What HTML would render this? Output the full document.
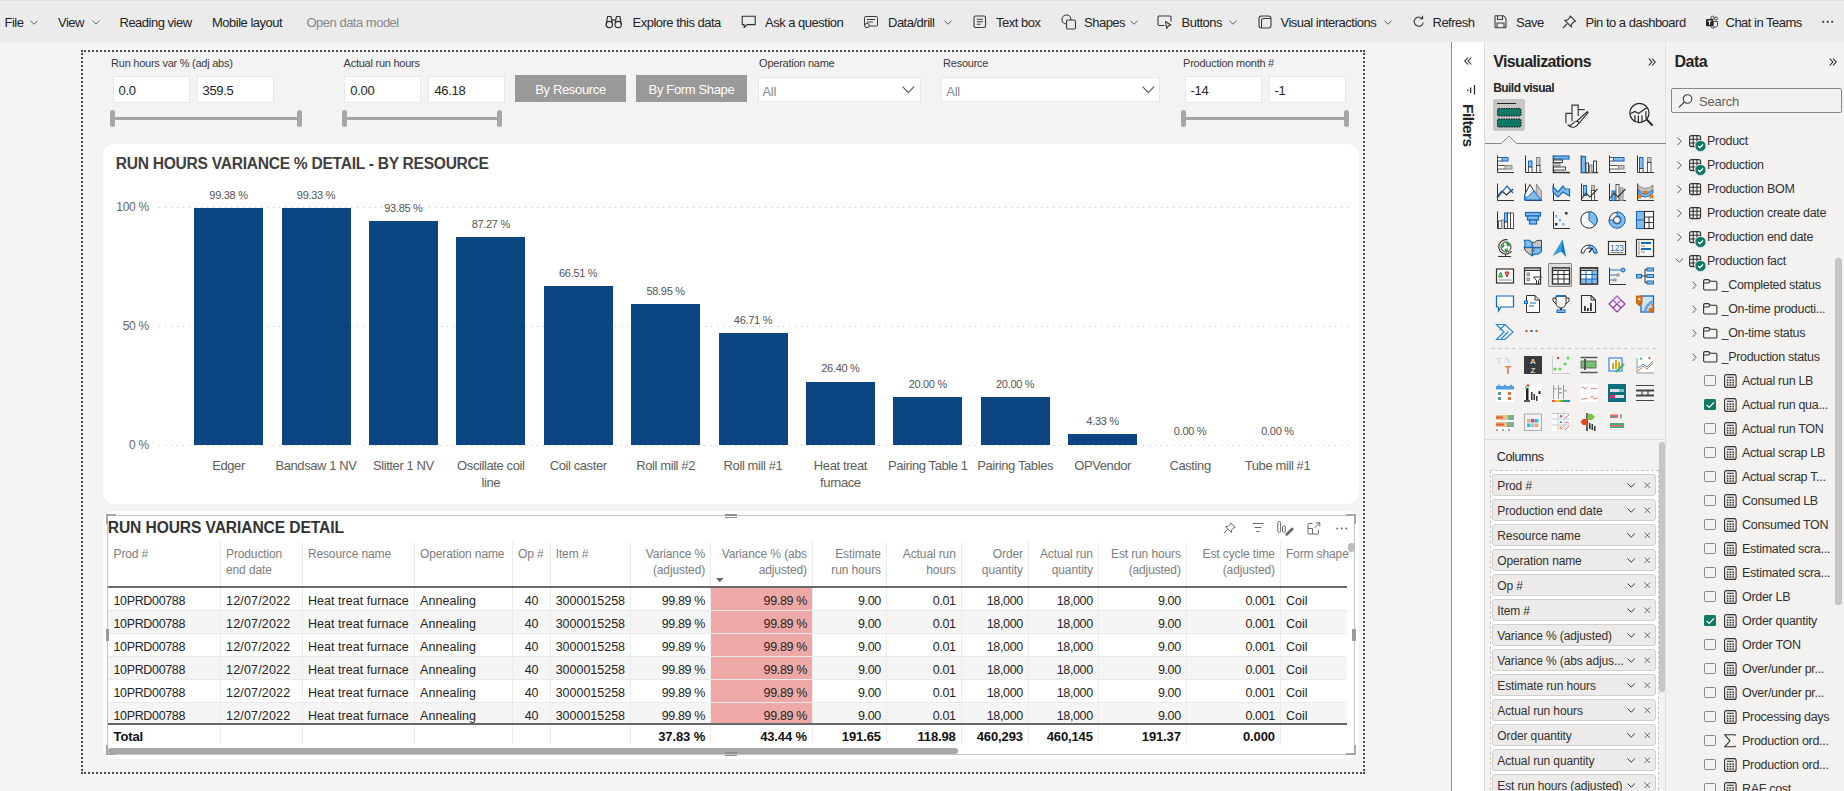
<!DOCTYPE html>
<html><head><meta charset="utf-8"><title>Power BI</title>
<style>
html,body{margin:0;padding:0;}
body{width:1844px;height:791px;overflow:hidden;position:relative;background:#f3f3f3;font-family:"Liberation Sans",sans-serif;}
.t{position:absolute;line-height:1;white-space:nowrap;}
.b{position:absolute;box-sizing:border-box;}
svg.b{overflow:visible;}
</style></head><body>

<div class="b" style="left:0px;top:0px;width:1844px;height:42px;background:#ebebeb;border-top:1px solid #dedede;"></div>
<div class="t" style="left:4.5px;top:16.3px;font-size:13px;color:#252423;font-weight:400;letter-spacing:-0.5px;">File</div>
<svg class="b" style="left:30px;top:20.0px;" width="8" height="5" viewBox="0 0 8 5"><path d="M0.5 0.8 L4 4.2 L7.5 0.8" fill="none" stroke="#605e5c" stroke-width="1"/></svg>
<div class="t" style="left:58.0px;top:16.3px;font-size:13px;color:#252423;font-weight:400;letter-spacing:-0.5px;">View</div>
<svg class="b" style="left:91.5px;top:20.0px;" width="8" height="5" viewBox="0 0 8 5"><path d="M0.5 0.8 L4 4.2 L7.5 0.8" fill="none" stroke="#605e5c" stroke-width="1"/></svg>
<div class="t" style="left:119.5px;top:16.3px;font-size:13px;color:#252423;font-weight:400;letter-spacing:-0.5px;">Reading view</div>
<div class="t" style="left:212.0px;top:16.3px;font-size:13px;color:#252423;font-weight:400;letter-spacing:-0.5px;">Mobile layout</div>
<div class="t" style="left:306.5px;top:16.3px;font-size:13px;color:#8a8886;font-weight:400;letter-spacing:-0.5px;">Open data model</div>
<svg class="b" style="left:605px;top:15px;" width="18" height="14" viewBox="0 0 18 14"><g fill="none" stroke="#323130" stroke-width="1.2"><circle cx="4.3" cy="9.5" r="3.2"/><circle cx="13.2" cy="9.5" r="3.2"/><path d="M1.2 9.3 L2.6 1.5 H6 L7.3 8"/><path d="M16.3 9.3 L14.9 1.5 H11.5 L10.2 8"/><path d="M6.5 5 H11"/></g></svg>
<div class="t" style="left:632.5px;top:16.3px;font-size:13px;color:#252423;font-weight:400;letter-spacing:-0.5px;">Explore this data</div>
<svg class="b" style="left:741px;top:15px;" width="16" height="14" viewBox="0 0 16 14"><path d="M1.2 1.2 H14.2 V9.6 H6 L3.2 12.5 V9.6 H1.2 Z" fill="none" stroke="#323130" stroke-width="1.1" stroke-linejoin="round"/></svg>
<div class="t" style="left:765.0px;top:16.3px;font-size:13px;color:#252423;font-weight:400;letter-spacing:-0.5px;">Ask a question</div>
<svg class="b" style="left:863px;top:15px;" width="16" height="14" viewBox="0 0 16 14"><g fill="none" stroke="#3b3a39" stroke-width="1"><rect x="1.5" y="1.5" width="13" height="9.5" rx="1"/><path d="M4 4.5 H12 M4 7 H10"/><circle cx="4" cy="10.5" r="2.2" fill="#ebebeb"/></g></svg>
<div class="t" style="left:888.0px;top:16.3px;font-size:13px;color:#252423;font-weight:400;letter-spacing:-0.5px;">Data/drill</div>
<svg class="b" style="left:943.5px;top:20.0px;" width="8" height="5" viewBox="0 0 8 5"><path d="M0.5 0.8 L4 4.2 L7.5 0.8" fill="none" stroke="#605e5c" stroke-width="1"/></svg>
<svg class="b" style="left:973px;top:15px;" width="14" height="14" viewBox="0 0 14 14"><g fill="none" stroke="#3b3a39" stroke-width="1.1"><rect x="1" y="1" width="11.5" height="11.5" rx="1.5"/><path d="M3.8 4.3 H9.7 M3.8 6.8 H9.7 M3.8 9.3 H7.5"/></g></svg>
<div class="t" style="left:996.0px;top:16.3px;font-size:13px;color:#252423;font-weight:400;letter-spacing:-0.5px;">Text box</div>
<svg class="b" style="left:1061px;top:14px;" width="16" height="16" viewBox="0 0 16 16"><g fill="none" stroke="#3b3a39" stroke-width="1.1"><circle cx="5.5" cy="5.5" r="4.5"/><rect x="5.5" y="6" width="9" height="9" rx="1.5" fill="#ebebeb"/></g></svg>
<div class="t" style="left:1084.0px;top:16.3px;font-size:13px;color:#252423;font-weight:400;letter-spacing:-0.5px;">Shapes</div>
<svg class="b" style="left:1129.5px;top:20.0px;" width="8" height="5" viewBox="0 0 8 5"><path d="M0.5 0.8 L4 4.2 L7.5 0.8" fill="none" stroke="#605e5c" stroke-width="1"/></svg>
<svg class="b" style="left:1157px;top:15px;" width="16" height="14" viewBox="0 0 16 14"><g fill="none" stroke="#3b3a39" stroke-width="1.1"><path d="M7.5 10.5 H2 a1 1 0 0 1 -1 -1 V2 a1 1 0 0 1 1 -1 H13 a1 1 0 0 1 1 1 V6.5"/><path d="M8.5 6.5 L9.7 13.5 L11.2 11 L13.8 10 Z" stroke-linejoin="round"/></g></svg>
<div class="t" style="left:1181.5px;top:16.3px;font-size:13px;color:#252423;font-weight:400;letter-spacing:-0.5px;">Buttons</div>
<svg class="b" style="left:1229px;top:20.0px;" width="8" height="5" viewBox="0 0 8 5"><path d="M0.5 0.8 L4 4.2 L7.5 0.8" fill="none" stroke="#605e5c" stroke-width="1"/></svg>
<svg class="b" style="left:1258px;top:15px;" width="14" height="14" viewBox="0 0 14 14"><g fill="none" stroke="#3b3a39" stroke-width="1.1"><rect x="1" y="1" width="12" height="12" rx="2.5"/><path d="M3.5 12.5 V5.5 a2 2 0 0 1 2 -2 H12.5"/></g></svg>
<div class="t" style="left:1280.5px;top:16.3px;font-size:13px;color:#252423;font-weight:400;letter-spacing:-0.5px;">Visual interactions</div>
<svg class="b" style="left:1384px;top:20.0px;" width="8" height="5" viewBox="0 0 8 5"><path d="M0.5 0.8 L4 4.2 L7.5 0.8" fill="none" stroke="#605e5c" stroke-width="1"/></svg>
<svg class="b" style="left:1413px;top:15px;" width="12" height="14" viewBox="0 0 12 14"><g fill="none" stroke="#3b3a39" stroke-width="1.1"><path d="M9.3 3.6 A4.6 4.6 0 1 0 10.3 7.5"/><path d="M9.6 0.8 V3.8 H6.6"/></g></svg>
<div class="t" style="left:1432.5px;top:16.3px;font-size:13px;color:#252423;font-weight:400;letter-spacing:-0.5px;">Refresh</div>
<svg class="b" style="left:1494px;top:15px;" width="13" height="14" viewBox="0 0 13 14"><g fill="none" stroke="#3b3a39" stroke-width="1.1"><path d="M1 1.5 a0.8 0.8 0 0 1 0.8 -0.8 H9.5 L12 3.2 V12 a0.8 0.8 0 0 1 -0.8 0.8 H1.8 a0.8 0.8 0 0 1 -0.8 -0.8 Z"/><path d="M3.5 1 V4.5 H8.5 V1"/><path d="M3 12.5 V8 H10 V12.5"/></g></svg>
<div class="t" style="left:1516.0px;top:16.3px;font-size:13px;color:#252423;font-weight:400;letter-spacing:-0.5px;">Save</div>
<svg class="b" style="left:1562px;top:15px;" width="15" height="14" viewBox="0 0 15 14"><g fill="none" stroke="#3b3a39" stroke-width="1.1" stroke-linejoin="round"><path d="M8.3 1 L13.6 6.3 L11.8 7 L9.4 9.4 L9.4 12 L2.6 5.2 L5.2 5.2 L7.6 2.8 Z"/><path d="M5 9 L1 13"/></g></svg>
<div class="t" style="left:1585.5px;top:16.3px;font-size:13px;color:#252423;font-weight:400;letter-spacing:-0.5px;">Pin to a dashboard</div>
<svg class="b" style="left:1705px;top:15px;" width="14" height="14" viewBox="0 0 14 14"><g><circle cx="11" cy="3.5" r="1.5" fill="none" stroke="#3b3a39" stroke-width="0.9"/><path d="M8.2 6.5 H12.5 V10.5 a2.2 2.2 0 0 1 -4.3 0 Z" fill="none" stroke="#3b3a39" stroke-width="0.9"/><circle cx="7.5" cy="2.8" r="1.6" fill="none" stroke="#3b3a39" stroke-width="0.9"/><path d="M5.5 11.2 a2.8 2.8 0 0 0 3.8 1.5" fill="none" stroke="#3b3a39" stroke-width="0.9"/><rect x="1" y="4" width="7.2" height="7.2" rx="1" fill="#252423"/><path d="M2.8 6 H6.4 M4.6 6 V9.8" stroke="#fff" stroke-width="1.2"/></g></svg>
<div class="t" style="left:1725.5px;top:16.3px;font-size:13px;color:#252423;font-weight:400;letter-spacing:-0.5px;">Chat in Teams</div>
<svg class="b" style="left:1822px;top:20px;" width="12" height="4" viewBox="0 0 12 4"><g fill="#3b3a39"><circle cx="1.2" cy="1.8" r="1.1"/><circle cx="5.7" cy="1.8" r="1.1"/><circle cx="10.2" cy="1.8" r="1.1"/></g></svg>
<div class="b" style="left:81px;top:50px;width:1284px;height:724px;border:2px dotted #4a4a4a;"></div>
<div class="t" style="left:111.1px;top:58.0px;font-size:11px;color:#3b3a39;font-weight:400;letter-spacing:-0.25px;">Run hours var % (adj abs)</div>
<div class="b" style="left:112.5px;top:76px;width:77px;height:26.5px;background:#fff;border:1px solid #e8e8e8;"></div>
<div class="b" style="left:196.5px;top:76px;width:77px;height:26.5px;background:#fff;border:1px solid #e8e8e8;"></div>
<div class="t" style="left:118.5px;top:84.1px;font-size:13px;color:#252423;font-weight:400;letter-spacing:-0.3px;">0.0</div>
<div class="t" style="left:202.5px;top:84.1px;font-size:13px;color:#252423;font-weight:400;letter-spacing:-0.3px;">359.5</div>
<div class="b" style="left:111.5px;top:116.8px;width:187.5px;height:3px;background:#a6a6a6;"></div>
<div class="b" style="left:109.5px;top:110px;width:5px;height:16.5px;background:#a6a6a6;border-radius:2.5px;"></div>
<div class="b" style="left:297px;top:110px;width:5px;height:16.5px;background:#a6a6a6;border-radius:2.5px;"></div>
<div class="t" style="left:343.6px;top:58.0px;font-size:11px;color:#3b3a39;font-weight:400;letter-spacing:-0.25px;">Actual run hours</div>
<div class="b" style="left:344.3px;top:76px;width:77px;height:26.5px;background:#fff;border:1px solid #e8e8e8;"></div>
<div class="b" style="left:428.4px;top:76px;width:77px;height:26.5px;background:#fff;border:1px solid #e8e8e8;"></div>
<div class="t" style="left:350.3px;top:84.1px;font-size:13px;color:#252423;font-weight:400;letter-spacing:-0.3px;">0.00</div>
<div class="t" style="left:434.4px;top:84.1px;font-size:13px;color:#252423;font-weight:400;letter-spacing:-0.3px;">46.18</div>
<div class="b" style="left:344px;top:116.8px;width:155px;height:3px;background:#a6a6a6;"></div>
<div class="b" style="left:342px;top:110px;width:5px;height:16.5px;background:#a6a6a6;border-radius:2.5px;"></div>
<div class="b" style="left:497px;top:110px;width:5px;height:16.5px;background:#a6a6a6;border-radius:2.5px;"></div>
<div class="t" style="left:1183.1px;top:58.0px;font-size:11px;color:#3b3a39;font-weight:400;letter-spacing:-0.25px;">Production month #</div>
<div class="b" style="left:1184.5px;top:76px;width:77px;height:26.5px;background:#fff;border:1px solid #e8e8e8;"></div>
<div class="b" style="left:1268.6px;top:76px;width:77px;height:26.5px;background:#fff;border:1px solid #e8e8e8;"></div>
<div class="t" style="left:1190.5px;top:84.1px;font-size:13px;color:#252423;font-weight:400;letter-spacing:-0.3px;">-14</div>
<div class="t" style="left:1274.6px;top:84.1px;font-size:13px;color:#252423;font-weight:400;letter-spacing:-0.3px;">-1</div>
<div class="b" style="left:1183px;top:116.8px;width:163.4000000000001px;height:3px;background:#a6a6a6;"></div>
<div class="b" style="left:1181px;top:110px;width:5px;height:16.5px;background:#a6a6a6;border-radius:2.5px;"></div>
<div class="b" style="left:1344.4px;top:110px;width:5px;height:16.5px;background:#a6a6a6;border-radius:2.5px;"></div>
<div class="b" style="left:515px;top:75px;width:111px;height:27px;background:#999999;"></div>
<div class="t" style="left:515.0px;width:111px;text-align:center;top:83.1px;font-size:13px;color:#ffffff;font-weight:400;letter-spacing:-0.35px;">By Resource</div>
<div class="b" style="left:636px;top:75px;width:111px;height:27px;background:#999999;"></div>
<div class="t" style="left:636.0px;width:111px;text-align:center;top:83.1px;font-size:13px;color:#ffffff;font-weight:400;letter-spacing:-0.35px;">By Form Shape</div>
<div class="t" style="left:759.1px;top:58.0px;font-size:11px;color:#3b3a39;font-weight:400;letter-spacing:-0.25px;">Operation name</div>
<div class="b" style="left:757.5px;top:76.7px;width:163px;height:25px;background:#fff;border:1px solid #e8e8e8;"></div>
<div class="t" style="left:762.5px;top:84.5px;font-size:13px;color:#8a8a8a;font-weight:400;letter-spacing:-0.3px;">All</div>
<svg class="b" style="left:902.3px;top:86px;" width="13" height="8" viewBox="0 0 13 8"><path d="M0.6 0.6 L6.3 6.6 L12 0.6" fill="none" stroke="#555" stroke-width="1.1"/></svg>
<div class="t" style="left:943.1px;top:58.0px;font-size:11px;color:#3b3a39;font-weight:400;letter-spacing:-0.25px;">Resource</div>
<div class="b" style="left:941.3px;top:76.7px;width:219px;height:25px;background:#fff;border:1px solid #e8e8e8;"></div>
<div class="t" style="left:946.3px;top:84.5px;font-size:13px;color:#8a8a8a;font-weight:400;letter-spacing:-0.3px;">All</div>
<svg class="b" style="left:1141.7px;top:86px;" width="13" height="8" viewBox="0 0 13 8"><path d="M0.6 0.6 L6.3 6.6 L12 0.6" fill="none" stroke="#555" stroke-width="1.1"/></svg>
<div class="b" style="left:103px;top:143.6px;width:1256px;height:360.5px;background:#fff;border-radius:12px;"></div>
<div class="t" style="left:115.8px;top:156.2px;font-size:15.6px;color:#404040;font-weight:700;letter-spacing:-0.28px;">RUN HOURS VARIANCE % DETAIL - BY RESOURCE</div>
<div class="t" style="right:1695.2px;top:200.8px;font-size:12px;color:#666666;font-weight:400;letter-spacing:-0.3px;">100 %</div>
<div class="b" style="left:159px;top:207px;width:1191px;height:1px;background-image:linear-gradient(to right,#c8c8c8 0,#c8c8c8 1px,transparent 1px);background-size:6px 1px;"></div>
<div class="t" style="right:1695.2px;top:319.8px;font-size:12px;color:#666666;font-weight:400;letter-spacing:-0.3px;">50 %</div>
<div class="b" style="left:159px;top:326px;width:1191px;height:1px;background-image:linear-gradient(to right,#c8c8c8 0,#c8c8c8 1px,transparent 1px);background-size:6px 1px;"></div>
<div class="t" style="right:1695.2px;top:438.8px;font-size:12px;color:#666666;font-weight:400;letter-spacing:-0.3px;">0 %</div>
<div class="b" style="left:159px;top:445px;width:1191px;height:1px;background-image:linear-gradient(to right,#c8c8c8 0,#c8c8c8 1px,transparent 1px);background-size:6px 1px;"></div>
<div class="b" style="left:194px;top:208px;width:69px;height:237.0px;background:#0b4582;"></div>
<div class="t" style="left:183.5px;width:90px;text-align:center;top:189.7px;font-size:11px;color:#555555;font-weight:400;letter-spacing:-0.3px;">99.38 %</div>
<div class="t" style="left:183.5px;top:457.2px;width:90px;text-align:center;font-size:13px;line-height:17px;color:#605e5c;letter-spacing:-0.4px;white-space:normal;">Edger</div>
<div class="b" style="left:282px;top:208px;width:69px;height:237.0px;background:#0b4582;"></div>
<div class="t" style="left:271.0px;width:90px;text-align:center;top:189.8px;font-size:11px;color:#555555;font-weight:400;letter-spacing:-0.3px;">99.33 %</div>
<div class="t" style="left:271.0px;top:457.2px;width:90px;text-align:center;font-size:13px;line-height:17px;color:#605e5c;letter-spacing:-0.4px;white-space:normal;">Bandsaw 1 NV</div>
<div class="b" style="left:369px;top:221px;width:69px;height:224.0px;background:#0b4582;"></div>
<div class="t" style="left:358.4px;width:90px;text-align:center;top:202.8px;font-size:11px;color:#555555;font-weight:400;letter-spacing:-0.3px;">93.85 %</div>
<div class="t" style="left:358.4px;top:457.2px;width:90px;text-align:center;font-size:13px;line-height:17px;color:#605e5c;letter-spacing:-0.4px;white-space:normal;">Slitter 1 NV</div>
<div class="b" style="left:456px;top:237px;width:69px;height:208.0px;background:#0b4582;"></div>
<div class="t" style="left:445.8px;width:90px;text-align:center;top:218.5px;font-size:11px;color:#555555;font-weight:400;letter-spacing:-0.3px;">87.27 %</div>
<div class="t" style="left:445.8px;top:457.2px;width:90px;text-align:center;font-size:13px;line-height:17px;color:#605e5c;letter-spacing:-0.4px;white-space:normal;">Oscillate coil<br>line</div>
<div class="b" style="left:544px;top:286px;width:69px;height:159.0px;background:#0b4582;"></div>
<div class="t" style="left:533.2px;width:90px;text-align:center;top:267.9px;font-size:11px;color:#555555;font-weight:400;letter-spacing:-0.3px;">66.51 %</div>
<div class="t" style="left:533.2px;top:457.2px;width:90px;text-align:center;font-size:13px;line-height:17px;color:#605e5c;letter-spacing:-0.4px;white-space:normal;">Coil caster</div>
<div class="b" style="left:631px;top:304px;width:69px;height:141.0px;background:#0b4582;"></div>
<div class="t" style="left:620.6px;width:90px;text-align:center;top:285.9px;font-size:11px;color:#555555;font-weight:400;letter-spacing:-0.3px;">58.95 %</div>
<div class="t" style="left:620.6px;top:457.2px;width:90px;text-align:center;font-size:13px;line-height:17px;color:#605e5c;letter-spacing:-0.4px;white-space:normal;">Roll mill #2</div>
<div class="b" style="left:719px;top:333px;width:69px;height:112.0px;background:#0b4582;"></div>
<div class="t" style="left:708.0px;width:90px;text-align:center;top:315.0px;font-size:11px;color:#555555;font-weight:400;letter-spacing:-0.3px;">46.71 %</div>
<div class="t" style="left:708.0px;top:457.2px;width:90px;text-align:center;font-size:13px;line-height:17px;color:#605e5c;letter-spacing:-0.4px;white-space:normal;">Roll mill #1</div>
<div class="b" style="left:806px;top:382px;width:69px;height:63.0px;background:#0b4582;"></div>
<div class="t" style="left:795.4px;width:90px;text-align:center;top:363.4px;font-size:11px;color:#555555;font-weight:400;letter-spacing:-0.3px;">26.40 %</div>
<div class="t" style="left:795.4px;top:457.2px;width:90px;text-align:center;font-size:13px;line-height:17px;color:#605e5c;letter-spacing:-0.4px;white-space:normal;">Heat treat<br>furnace</div>
<div class="b" style="left:893px;top:397px;width:69px;height:48.0px;background:#0b4582;"></div>
<div class="t" style="left:882.8px;width:90px;text-align:center;top:378.6px;font-size:11px;color:#555555;font-weight:400;letter-spacing:-0.3px;">20.00 %</div>
<div class="t" style="left:882.8px;top:457.2px;width:90px;text-align:center;font-size:13px;line-height:17px;color:#605e5c;letter-spacing:-0.4px;white-space:normal;">Pairing Table 1</div>
<div class="b" style="left:981px;top:397px;width:69px;height:48.0px;background:#0b4582;"></div>
<div class="t" style="left:970.2px;width:90px;text-align:center;top:378.6px;font-size:11px;color:#555555;font-weight:400;letter-spacing:-0.3px;">20.00 %</div>
<div class="t" style="left:970.2px;top:457.2px;width:90px;text-align:center;font-size:13px;line-height:17px;color:#605e5c;letter-spacing:-0.4px;white-space:normal;">Pairing Tables</div>
<div class="b" style="left:1068px;top:434px;width:69px;height:11.0px;background:#0b4582;"></div>
<div class="t" style="left:1057.6px;width:90px;text-align:center;top:415.9px;font-size:11px;color:#555555;font-weight:400;letter-spacing:-0.3px;">4.33 %</div>
<div class="t" style="left:1057.6px;top:457.2px;width:90px;text-align:center;font-size:13px;line-height:17px;color:#605e5c;letter-spacing:-0.4px;white-space:normal;">OPVendor</div>
<div class="t" style="left:1145.1px;width:90px;text-align:center;top:426.2px;font-size:11px;color:#555555;font-weight:400;letter-spacing:-0.3px;">0.00 %</div>
<div class="t" style="left:1145.1px;top:457.2px;width:90px;text-align:center;font-size:13px;line-height:17px;color:#605e5c;letter-spacing:-0.4px;white-space:normal;">Casting</div>
<div class="t" style="left:1232.5px;width:90px;text-align:center;top:426.2px;font-size:11px;color:#555555;font-weight:400;letter-spacing:-0.3px;">0.00 %</div>
<div class="t" style="left:1232.5px;top:457.2px;width:90px;text-align:center;font-size:13px;line-height:17px;color:#605e5c;letter-spacing:-0.4px;white-space:normal;">Tube mill #1</div>
<div class="b" style="left:103px;top:510.8px;width:1256px;height:248.2px;background:#fff;border-radius:12px;"></div>
<div class="b" style="left:107px;top:515px;width:1248px;height:240px;border:1px solid #c6c6c6;"></div>
<div class="t" style="left:107.8px;top:519.7px;font-size:15.6px;color:#333333;font-weight:700;letter-spacing:-0.1px;">RUN HOURS VARIANCE DETAIL</div>
<div class="b" style="left:108px;top:588px;width:1239px;height:22px;background:#ffffff;"></div>
<div class="b" style="left:711px;top:588px;width:101.5px;height:22px;background:#eea9a6;"></div>
<div class="b" style="left:108px;top:610px;width:1239px;height:1px;background:#e9e9e9;"></div>
<div class="b" style="left:108px;top:611px;width:1239px;height:22px;background:#f5f5f5;"></div>
<div class="b" style="left:711px;top:611px;width:101.5px;height:22px;background:#eea9a6;"></div>
<div class="b" style="left:108px;top:633px;width:1239px;height:1px;background:#e9e9e9;"></div>
<div class="b" style="left:108px;top:634px;width:1239px;height:22px;background:#ffffff;"></div>
<div class="b" style="left:711px;top:634px;width:101.5px;height:22px;background:#eea9a6;"></div>
<div class="b" style="left:108px;top:656px;width:1239px;height:1px;background:#e9e9e9;"></div>
<div class="b" style="left:108px;top:657px;width:1239px;height:22px;background:#f5f5f5;"></div>
<div class="b" style="left:711px;top:657px;width:101.5px;height:22px;background:#eea9a6;"></div>
<div class="b" style="left:108px;top:679px;width:1239px;height:1px;background:#e9e9e9;"></div>
<div class="b" style="left:108px;top:680px;width:1239px;height:22px;background:#ffffff;"></div>
<div class="b" style="left:711px;top:680px;width:101.5px;height:22px;background:#eea9a6;"></div>
<div class="b" style="left:108px;top:702px;width:1239px;height:1px;background:#e9e9e9;"></div>
<div class="b" style="left:108px;top:703px;width:1239px;height:20px;background:#f5f5f5;"></div>
<div class="b" style="left:711px;top:703px;width:101.5px;height:20px;background:#eea9a6;"></div>
<div class="b" style="left:220px;top:542px;width:1px;height:203px;background:#ececec;"></div>
<div class="b" style="left:302px;top:542px;width:1px;height:203px;background:#ececec;"></div>
<div class="b" style="left:414px;top:542px;width:1px;height:203px;background:#ececec;"></div>
<div class="b" style="left:512px;top:542px;width:1px;height:203px;background:#ececec;"></div>
<div class="b" style="left:550px;top:542px;width:1px;height:203px;background:#ececec;"></div>
<div class="b" style="left:630px;top:542px;width:1px;height:203px;background:#ececec;"></div>
<div class="b" style="left:710px;top:542px;width:1px;height:203px;background:#ececec;"></div>
<div class="b" style="left:812px;top:542px;width:1px;height:203px;background:#ececec;"></div>
<div class="b" style="left:886px;top:542px;width:1px;height:203px;background:#ececec;"></div>
<div class="b" style="left:961px;top:542px;width:1px;height:203px;background:#ececec;"></div>
<div class="b" style="left:1028px;top:542px;width:1px;height:203px;background:#ececec;"></div>
<div class="b" style="left:1098px;top:542px;width:1px;height:203px;background:#ececec;"></div>
<div class="b" style="left:1186px;top:542px;width:1px;height:203px;background:#ececec;"></div>
<div class="b" style="left:1280px;top:542px;width:1px;height:203px;background:#ececec;"></div>
<div class="b" style="left:108px;top:586px;width:1239px;height:2px;background:#686868;"></div>
<div class="b" style="left:108px;top:723px;width:1239px;height:2px;background:#686868;"></div>
<div class="t" style="left:113.5px;top:546.1px;font-size:12px;line-height:16.2px;color:#7d7d7d;letter-spacing:-0.12px;">Prod #</div>
<div class="t" style="left:226.0px;top:546.1px;font-size:12px;line-height:16.2px;color:#7d7d7d;letter-spacing:-0.12px;">Production<br>end date</div>
<div class="t" style="left:307.9px;top:546.1px;font-size:12px;line-height:16.2px;color:#7d7d7d;letter-spacing:-0.12px;">Resource name</div>
<div class="t" style="left:420.0px;top:546.1px;font-size:12px;line-height:16.2px;color:#7d7d7d;letter-spacing:-0.12px;">Operation name</div>
<div class="t" style="left:518.1px;top:546.1px;font-size:12px;line-height:16.2px;color:#7d7d7d;letter-spacing:-0.12px;">Op #</div>
<div class="t" style="left:555.7px;top:546.1px;font-size:12px;line-height:16.2px;color:#7d7d7d;letter-spacing:-0.12px;">Item #</div>
<div class="t" style="right:1138.9px;top:546.1px;font-size:12px;line-height:16.2px;color:#7d7d7d;letter-spacing:-0.12px;text-align:right;">Variance %<br>(adjusted)</div>
<div class="t" style="right:1037.0px;top:546.1px;font-size:12px;line-height:16.2px;color:#7d7d7d;letter-spacing:-0.12px;text-align:right;">Variance % (abs<br>adjusted)</div>
<div class="t" style="right:963.1px;top:546.1px;font-size:12px;line-height:16.2px;color:#7d7d7d;letter-spacing:-0.12px;text-align:right;">Estimate<br>run hours</div>
<div class="t" style="right:888.3px;top:546.1px;font-size:12px;line-height:16.2px;color:#7d7d7d;letter-spacing:-0.12px;text-align:right;">Actual run<br>hours</div>
<div class="t" style="right:821.1px;top:546.1px;font-size:12px;line-height:16.2px;color:#7d7d7d;letter-spacing:-0.12px;text-align:right;">Order<br>quantity</div>
<div class="t" style="right:751.2px;top:546.1px;font-size:12px;line-height:16.2px;color:#7d7d7d;letter-spacing:-0.12px;text-align:right;">Actual run<br>quantity</div>
<div class="t" style="right:663.2px;top:546.1px;font-size:12px;line-height:16.2px;color:#7d7d7d;letter-spacing:-0.12px;text-align:right;">Est run hours<br>(adjusted)</div>
<div class="t" style="right:569.1px;top:546.1px;font-size:12px;line-height:16.2px;color:#7d7d7d;letter-spacing:-0.12px;text-align:right;">Est cycle time<br>(adjusted)</div>
<div class="t" style="left:1285.9px;top:546.1px;font-size:12px;line-height:16.2px;color:#7d7d7d;letter-spacing:-0.12px;">Form shape</div>
<svg class="b" style="left:715.5px;top:578px;" width="8" height="4.5" viewBox="0 0 8 4.5"><path d="M0 0 H7.6 L3.8 4.2 Z" fill="#666"/></svg>
<div class="t" style="left:113.5px;top:594.6px;font-size:12.5px;color:#252423;font-weight:400;letter-spacing:-0.35px;">10PRD00788</div>
<div class="t" style="left:226.0px;top:594.6px;font-size:12.5px;color:#252423;font-weight:400;letter-spacing:0.18px;">12/07/2022</div>
<div class="t" style="left:307.9px;top:594.6px;font-size:12.5px;color:#252423;font-weight:400;letter-spacing:0.05px;">Heat treat furnace</div>
<div class="t" style="left:420.0px;top:594.6px;font-size:12.5px;color:#252423;font-weight:400;letter-spacing:0.05px;">Annealing</div>
<div class="t" style="left:513.4px;width:36px;text-align:center;top:594.6px;font-size:12.5px;color:#252423;font-weight:400;letter-spacing:-0.35px;">40</div>
<div class="t" style="left:555.7px;top:594.6px;font-size:12.5px;color:#252423;font-weight:400;letter-spacing:-0.02px;">3000015258</div>
<div class="t" style="right:1138.9px;top:594.6px;font-size:12.5px;color:#252423;font-weight:400;letter-spacing:-0.35px;">99.89 %</div>
<div class="t" style="right:1037.0px;top:594.6px;font-size:12.5px;color:#252423;font-weight:400;letter-spacing:-0.35px;">99.89 %</div>
<div class="t" style="right:963.1px;top:594.6px;font-size:12.5px;color:#252423;font-weight:400;letter-spacing:-0.35px;">9.00</div>
<div class="t" style="right:888.3px;top:594.6px;font-size:12.5px;color:#252423;font-weight:400;letter-spacing:-0.35px;">0.01</div>
<div class="t" style="right:821.1px;top:594.6px;font-size:12.5px;color:#252423;font-weight:400;letter-spacing:-0.35px;">18,000</div>
<div class="t" style="right:751.2px;top:594.6px;font-size:12.5px;color:#252423;font-weight:400;letter-spacing:-0.35px;">18,000</div>
<div class="t" style="right:663.2px;top:594.6px;font-size:12.5px;color:#252423;font-weight:400;letter-spacing:-0.35px;">9.00</div>
<div class="t" style="right:569.1px;top:594.6px;font-size:12.5px;color:#252423;font-weight:400;letter-spacing:-0.35px;">0.001</div>
<div class="t" style="left:1285.9px;top:594.6px;font-size:12.5px;color:#252423;font-weight:400;letter-spacing:0.05px;">Coil</div>
<div class="t" style="left:113.5px;top:617.6px;font-size:12.5px;color:#252423;font-weight:400;letter-spacing:-0.35px;">10PRD00788</div>
<div class="t" style="left:226.0px;top:617.6px;font-size:12.5px;color:#252423;font-weight:400;letter-spacing:0.18px;">12/07/2022</div>
<div class="t" style="left:307.9px;top:617.6px;font-size:12.5px;color:#252423;font-weight:400;letter-spacing:0.05px;">Heat treat furnace</div>
<div class="t" style="left:420.0px;top:617.6px;font-size:12.5px;color:#252423;font-weight:400;letter-spacing:0.05px;">Annealing</div>
<div class="t" style="left:513.4px;width:36px;text-align:center;top:617.6px;font-size:12.5px;color:#252423;font-weight:400;letter-spacing:-0.35px;">40</div>
<div class="t" style="left:555.7px;top:617.6px;font-size:12.5px;color:#252423;font-weight:400;letter-spacing:-0.02px;">3000015258</div>
<div class="t" style="right:1138.9px;top:617.6px;font-size:12.5px;color:#252423;font-weight:400;letter-spacing:-0.35px;">99.89 %</div>
<div class="t" style="right:1037.0px;top:617.6px;font-size:12.5px;color:#252423;font-weight:400;letter-spacing:-0.35px;">99.89 %</div>
<div class="t" style="right:963.1px;top:617.6px;font-size:12.5px;color:#252423;font-weight:400;letter-spacing:-0.35px;">9.00</div>
<div class="t" style="right:888.3px;top:617.6px;font-size:12.5px;color:#252423;font-weight:400;letter-spacing:-0.35px;">0.01</div>
<div class="t" style="right:821.1px;top:617.6px;font-size:12.5px;color:#252423;font-weight:400;letter-spacing:-0.35px;">18,000</div>
<div class="t" style="right:751.2px;top:617.6px;font-size:12.5px;color:#252423;font-weight:400;letter-spacing:-0.35px;">18,000</div>
<div class="t" style="right:663.2px;top:617.6px;font-size:12.5px;color:#252423;font-weight:400;letter-spacing:-0.35px;">9.00</div>
<div class="t" style="right:569.1px;top:617.6px;font-size:12.5px;color:#252423;font-weight:400;letter-spacing:-0.35px;">0.001</div>
<div class="t" style="left:1285.9px;top:617.6px;font-size:12.5px;color:#252423;font-weight:400;letter-spacing:0.05px;">Coil</div>
<div class="t" style="left:113.5px;top:640.6px;font-size:12.5px;color:#252423;font-weight:400;letter-spacing:-0.35px;">10PRD00788</div>
<div class="t" style="left:226.0px;top:640.6px;font-size:12.5px;color:#252423;font-weight:400;letter-spacing:0.18px;">12/07/2022</div>
<div class="t" style="left:307.9px;top:640.6px;font-size:12.5px;color:#252423;font-weight:400;letter-spacing:0.05px;">Heat treat furnace</div>
<div class="t" style="left:420.0px;top:640.6px;font-size:12.5px;color:#252423;font-weight:400;letter-spacing:0.05px;">Annealing</div>
<div class="t" style="left:513.4px;width:36px;text-align:center;top:640.6px;font-size:12.5px;color:#252423;font-weight:400;letter-spacing:-0.35px;">40</div>
<div class="t" style="left:555.7px;top:640.6px;font-size:12.5px;color:#252423;font-weight:400;letter-spacing:-0.02px;">3000015258</div>
<div class="t" style="right:1138.9px;top:640.6px;font-size:12.5px;color:#252423;font-weight:400;letter-spacing:-0.35px;">99.89 %</div>
<div class="t" style="right:1037.0px;top:640.6px;font-size:12.5px;color:#252423;font-weight:400;letter-spacing:-0.35px;">99.89 %</div>
<div class="t" style="right:963.1px;top:640.6px;font-size:12.5px;color:#252423;font-weight:400;letter-spacing:-0.35px;">9.00</div>
<div class="t" style="right:888.3px;top:640.6px;font-size:12.5px;color:#252423;font-weight:400;letter-spacing:-0.35px;">0.01</div>
<div class="t" style="right:821.1px;top:640.6px;font-size:12.5px;color:#252423;font-weight:400;letter-spacing:-0.35px;">18,000</div>
<div class="t" style="right:751.2px;top:640.6px;font-size:12.5px;color:#252423;font-weight:400;letter-spacing:-0.35px;">18,000</div>
<div class="t" style="right:663.2px;top:640.6px;font-size:12.5px;color:#252423;font-weight:400;letter-spacing:-0.35px;">9.00</div>
<div class="t" style="right:569.1px;top:640.6px;font-size:12.5px;color:#252423;font-weight:400;letter-spacing:-0.35px;">0.001</div>
<div class="t" style="left:1285.9px;top:640.6px;font-size:12.5px;color:#252423;font-weight:400;letter-spacing:0.05px;">Coil</div>
<div class="t" style="left:113.5px;top:663.6px;font-size:12.5px;color:#252423;font-weight:400;letter-spacing:-0.35px;">10PRD00788</div>
<div class="t" style="left:226.0px;top:663.6px;font-size:12.5px;color:#252423;font-weight:400;letter-spacing:0.18px;">12/07/2022</div>
<div class="t" style="left:307.9px;top:663.6px;font-size:12.5px;color:#252423;font-weight:400;letter-spacing:0.05px;">Heat treat furnace</div>
<div class="t" style="left:420.0px;top:663.6px;font-size:12.5px;color:#252423;font-weight:400;letter-spacing:0.05px;">Annealing</div>
<div class="t" style="left:513.4px;width:36px;text-align:center;top:663.6px;font-size:12.5px;color:#252423;font-weight:400;letter-spacing:-0.35px;">40</div>
<div class="t" style="left:555.7px;top:663.6px;font-size:12.5px;color:#252423;font-weight:400;letter-spacing:-0.02px;">3000015258</div>
<div class="t" style="right:1138.9px;top:663.6px;font-size:12.5px;color:#252423;font-weight:400;letter-spacing:-0.35px;">99.89 %</div>
<div class="t" style="right:1037.0px;top:663.6px;font-size:12.5px;color:#252423;font-weight:400;letter-spacing:-0.35px;">99.89 %</div>
<div class="t" style="right:963.1px;top:663.6px;font-size:12.5px;color:#252423;font-weight:400;letter-spacing:-0.35px;">9.00</div>
<div class="t" style="right:888.3px;top:663.6px;font-size:12.5px;color:#252423;font-weight:400;letter-spacing:-0.35px;">0.01</div>
<div class="t" style="right:821.1px;top:663.6px;font-size:12.5px;color:#252423;font-weight:400;letter-spacing:-0.35px;">18,000</div>
<div class="t" style="right:751.2px;top:663.6px;font-size:12.5px;color:#252423;font-weight:400;letter-spacing:-0.35px;">18,000</div>
<div class="t" style="right:663.2px;top:663.6px;font-size:12.5px;color:#252423;font-weight:400;letter-spacing:-0.35px;">9.00</div>
<div class="t" style="right:569.1px;top:663.6px;font-size:12.5px;color:#252423;font-weight:400;letter-spacing:-0.35px;">0.001</div>
<div class="t" style="left:1285.9px;top:663.6px;font-size:12.5px;color:#252423;font-weight:400;letter-spacing:0.05px;">Coil</div>
<div class="t" style="left:113.5px;top:686.6px;font-size:12.5px;color:#252423;font-weight:400;letter-spacing:-0.35px;">10PRD00788</div>
<div class="t" style="left:226.0px;top:686.6px;font-size:12.5px;color:#252423;font-weight:400;letter-spacing:0.18px;">12/07/2022</div>
<div class="t" style="left:307.9px;top:686.6px;font-size:12.5px;color:#252423;font-weight:400;letter-spacing:0.05px;">Heat treat furnace</div>
<div class="t" style="left:420.0px;top:686.6px;font-size:12.5px;color:#252423;font-weight:400;letter-spacing:0.05px;">Annealing</div>
<div class="t" style="left:513.4px;width:36px;text-align:center;top:686.6px;font-size:12.5px;color:#252423;font-weight:400;letter-spacing:-0.35px;">40</div>
<div class="t" style="left:555.7px;top:686.6px;font-size:12.5px;color:#252423;font-weight:400;letter-spacing:-0.02px;">3000015258</div>
<div class="t" style="right:1138.9px;top:686.6px;font-size:12.5px;color:#252423;font-weight:400;letter-spacing:-0.35px;">99.89 %</div>
<div class="t" style="right:1037.0px;top:686.6px;font-size:12.5px;color:#252423;font-weight:400;letter-spacing:-0.35px;">99.89 %</div>
<div class="t" style="right:963.1px;top:686.6px;font-size:12.5px;color:#252423;font-weight:400;letter-spacing:-0.35px;">9.00</div>
<div class="t" style="right:888.3px;top:686.6px;font-size:12.5px;color:#252423;font-weight:400;letter-spacing:-0.35px;">0.01</div>
<div class="t" style="right:821.1px;top:686.6px;font-size:12.5px;color:#252423;font-weight:400;letter-spacing:-0.35px;">18,000</div>
<div class="t" style="right:751.2px;top:686.6px;font-size:12.5px;color:#252423;font-weight:400;letter-spacing:-0.35px;">18,000</div>
<div class="t" style="right:663.2px;top:686.6px;font-size:12.5px;color:#252423;font-weight:400;letter-spacing:-0.35px;">9.00</div>
<div class="t" style="right:569.1px;top:686.6px;font-size:12.5px;color:#252423;font-weight:400;letter-spacing:-0.35px;">0.001</div>
<div class="t" style="left:1285.9px;top:686.6px;font-size:12.5px;color:#252423;font-weight:400;letter-spacing:0.05px;">Coil</div>
<div class="t" style="left:113.5px;top:709.6px;font-size:12.5px;color:#252423;font-weight:400;letter-spacing:-0.35px;">10PRD00788</div>
<div class="t" style="left:226.0px;top:709.6px;font-size:12.5px;color:#252423;font-weight:400;letter-spacing:0.18px;">12/07/2022</div>
<div class="t" style="left:307.9px;top:709.6px;font-size:12.5px;color:#252423;font-weight:400;letter-spacing:0.05px;">Heat treat furnace</div>
<div class="t" style="left:420.0px;top:709.6px;font-size:12.5px;color:#252423;font-weight:400;letter-spacing:0.05px;">Annealing</div>
<div class="t" style="left:513.4px;width:36px;text-align:center;top:709.6px;font-size:12.5px;color:#252423;font-weight:400;letter-spacing:-0.35px;">40</div>
<div class="t" style="left:555.7px;top:709.6px;font-size:12.5px;color:#252423;font-weight:400;letter-spacing:-0.02px;">3000015258</div>
<div class="t" style="right:1138.9px;top:709.6px;font-size:12.5px;color:#252423;font-weight:400;letter-spacing:-0.35px;">99.89 %</div>
<div class="t" style="right:1037.0px;top:709.6px;font-size:12.5px;color:#252423;font-weight:400;letter-spacing:-0.35px;">99.89 %</div>
<div class="t" style="right:963.1px;top:709.6px;font-size:12.5px;color:#252423;font-weight:400;letter-spacing:-0.35px;">9.00</div>
<div class="t" style="right:888.3px;top:709.6px;font-size:12.5px;color:#252423;font-weight:400;letter-spacing:-0.35px;">0.01</div>
<div class="t" style="right:821.1px;top:709.6px;font-size:12.5px;color:#252423;font-weight:400;letter-spacing:-0.35px;">18,000</div>
<div class="t" style="right:751.2px;top:709.6px;font-size:12.5px;color:#252423;font-weight:400;letter-spacing:-0.35px;">18,000</div>
<div class="t" style="right:663.2px;top:709.6px;font-size:12.5px;color:#252423;font-weight:400;letter-spacing:-0.35px;">9.00</div>
<div class="t" style="right:569.1px;top:709.6px;font-size:12.5px;color:#252423;font-weight:400;letter-spacing:-0.35px;">0.001</div>
<div class="t" style="left:1285.9px;top:709.6px;font-size:12.5px;color:#252423;font-weight:400;letter-spacing:0.05px;">Coil</div>
<div class="t" style="left:113.5px;top:729.7px;font-size:13px;color:#111111;font-weight:700;letter-spacing:-0.1px;">Total</div>
<div class="t" style="right:1138.9px;top:729.7px;font-size:13px;color:#111111;font-weight:700;letter-spacing:-0.12px;">37.83 %</div>
<div class="t" style="right:1037.0px;top:729.7px;font-size:13px;color:#111111;font-weight:700;letter-spacing:-0.12px;">43.44 %</div>
<div class="t" style="right:963.1px;top:729.7px;font-size:13px;color:#111111;font-weight:700;letter-spacing:-0.12px;">191.65</div>
<div class="t" style="right:888.3px;top:729.7px;font-size:13px;color:#111111;font-weight:700;letter-spacing:-0.12px;">118.98</div>
<div class="t" style="right:821.1px;top:729.7px;font-size:13px;color:#111111;font-weight:700;letter-spacing:-0.12px;">460,293</div>
<div class="t" style="right:751.2px;top:729.7px;font-size:13px;color:#111111;font-weight:700;letter-spacing:-0.12px;">460,145</div>
<div class="t" style="right:663.2px;top:729.7px;font-size:13px;color:#111111;font-weight:700;letter-spacing:-0.12px;">191.37</div>
<div class="t" style="right:569.1px;top:729.7px;font-size:13px;color:#111111;font-weight:700;letter-spacing:-0.12px;">0.000</div>
<div class="b" style="left:108px;top:748px;width:850px;height:6px;background:#a8a8a8;border-radius:3px;"></div>
<div class="b" style="left:1348px;top:542.5px;width:7px;height:9px;background:#bdbdbd;border-radius:3.5px;"></div>
<div class="b" style="left:106px;top:514px;width:10px;height:2px;background:#a6a6a6;"></div>
<div class="b" style="left:106px;top:514px;width:2px;height:10px;background:#a6a6a6;"></div>
<div class="b" style="left:1346px;top:514px;width:10px;height:2px;background:#a6a6a6;"></div>
<div class="b" style="left:1354px;top:514px;width:2px;height:10px;background:#a6a6a6;"></div>
<div class="b" style="left:106px;top:753px;width:10px;height:2px;background:#a6a6a6;"></div>
<div class="b" style="left:106px;top:745px;width:2px;height:10px;background:#a6a6a6;"></div>
<div class="b" style="left:1346px;top:753px;width:10px;height:2px;background:#a6a6a6;"></div>
<div class="b" style="left:1354px;top:745px;width:2px;height:10px;background:#a6a6a6;"></div>
<div class="b" style="left:725px;top:514px;width:12px;height:1.5px;background:#8f8f8f;"></div>
<div class="b" style="left:725px;top:516.5px;width:12px;height:1.5px;background:#8f8f8f;"></div>
<div class="b" style="left:725px;top:752px;width:12px;height:1.5px;background:#8f8f8f;"></div>
<div class="b" style="left:725px;top:754.5px;width:12px;height:1.5px;background:#8f8f8f;"></div>
<div class="b" style="left:106px;top:629px;width:3px;height:12px;background:#9a9a9a;"></div>
<div class="b" style="left:1352px;top:629px;width:3.5px;height:12px;background:#9a9a9a;"></div>
<svg class="b" style="left:1223px;top:522px;" width="13" height="12" viewBox="0 0 13 12"><g fill="none" stroke="#6b6b6b" stroke-width="1" stroke-linejoin="round"><path d="M7.6 0.8 L12.2 5.4 L10.6 6 L8.5 8.1 L8.5 10.4 L2.6 4.5 L4.9 4.5 L7 2.4 Z"/><path d="M4.5 7.5 L0.8 11.2"/></g></svg>
<svg class="b" style="left:1251.5px;top:521.6px;" width="12" height="11" viewBox="0 0 12 11"><g stroke="#6b6b6b" stroke-width="1.1"><path d="M0.5 1.5 H11.5 M2.5 5.5 H9.5 M4.5 9.5 H7.5"/></g></svg>
<svg class="b" style="left:1277px;top:521px;" width="18" height="15" viewBox="0 0 18 15"><g fill="none" stroke="#6b6b6b" stroke-width="1"><rect x="0.8" y="0.5" width="2.8" height="10.8" rx="1"/><rect x="5.5" y="5" width="2.8" height="6.3" rx="1"/></g><path d="M15 6.2 L17 8.2 L10.6 14.4 L8.2 14.8 L8.6 12.4 Z" fill="#6b6b6b"/></svg>
<svg class="b" style="left:1307px;top:521.5px;" width="14" height="13" viewBox="0 0 14 13"><g fill="none" stroke="#6b6b6b" stroke-width="1"><path d="M5.5 1.5 H2 a1 1 0 0 0 -1 1 V11 a1 1 0 0 0 1 1 H10.5 a1 1 0 0 0 1 -1 V8"/><path d="M7.5 6 L12.5 1 M9 0.8 H12.8 V4.6"/><path d="M1 6.5 H5.5 V12"/></g></svg>
<svg class="b" style="left:1336px;top:527px;" width="12" height="3" viewBox="0 0 12 3"><g fill="#6b6b6b"><circle cx="1.2" cy="1.5" r="1"/><circle cx="5.7" cy="1.5" r="1"/><circle cx="10.2" cy="1.5" r="1"/></g></svg>
<div class="b" style="left:1451px;top:42px;width:34px;height:749px;background:#ffffff;border-left:1px solid #8f8f8f;border-right:1px solid #e1dfdd;"></div>
<svg class="b" style="left:1464.3px;top:57px;" width="8" height="8" viewBox="0 0 8 8"><path d="M4 0.5 L0.8 4 L4 7.5 M7.3 0.5 L4.1 4 L7.3 7.5" fill="none" stroke="#252423" stroke-width="1.1"/></svg>
<svg class="b" style="left:1466.5px;top:84.5px;" width="10" height="10" viewBox="0 0 10 10"><path d="M7.5 0 V9.5 M3.7 2.5 V8 M0.8 4.3 V6" fill="none" stroke="#252423" stroke-width="1.2"/></svg>
<div class="t" style="left:1446.7px;top:116.8px;width:42px;height:16px;font-size:15.5px;font-weight:700;color:#252423;letter-spacing:-0.55px;transform:rotate(90deg);transform-origin:center center;text-align:left;line-height:16px;">Filters</div>
<div class="b" style="left:1485px;top:42px;width:181px;height:749px;background:#f3f2f1;border-right:1px solid #e1dfdd;"></div>
<div class="t" style="left:1493.2px;top:53.8px;font-size:16px;color:#252423;font-weight:700;letter-spacing:-0.62px;">Visualizations</div>
<svg class="b" style="left:1647.5px;top:57.5px;" width="8" height="8" viewBox="0 0 8 8"><path d="M0.7 0.5 L3.9 4 L0.7 7.5 M4 0.5 L7.2 4 L4 7.5" fill="none" stroke="#252423" stroke-width="1.1"/></svg>
<div class="t" style="left:1493.2px;top:81.7px;font-size:12px;color:#252423;font-weight:700;letter-spacing:-0.55px;">Build visual</div>
<div class="b" style="left:1493.4px;top:99.2px;width:31.4px;height:31.5px;background:#c8c6c4;border-radius:2px;"></div>
<svg class="b" style="left:1497px;top:102.5px;" width="25" height="25" viewBox="0 0 25 25"><path d="M0 0.5 H19" stroke="#252423" stroke-width="1"/><rect x="0.5" y="5.5" width="23.5" height="7.5" rx="1" fill="#117865" stroke="#111" stroke-width="1" stroke-dasharray="1.5 1"/><rect x="0.5" y="16" width="23.5" height="8" rx="1" fill="#117865" stroke="#111" stroke-width="1" stroke-dasharray="1.5 1"/></svg>
<svg class="b" style="left:1565px;top:103.5px;" width="23" height="24" viewBox="0 0 23 24"><g fill="none" stroke="#3b3a39" stroke-width="1.2"><path d="M0.9 19.2 V9.4 H6.6"/><path d="M7 17.2 V1.2 H13.2 V12"/><path d="M13.2 5.6 H19.8"/></g><path d="M22.3 7.6 L12 17 L14.2 19 L23 8.6 Z" fill="#fff" stroke="#252423" stroke-width="1.1"/><path d="M12.4 17.2 Q9.5 17.2 7.8 19.6 Q6 21.6 3.4 21.3 Q5.8 24 9.6 23 Q12.8 21.8 13.8 18.6 Z" fill="#fff" stroke="#252423" stroke-width="1.1"/></svg>
<svg class="b" style="left:1628.5px;top:103px;" width="25" height="25" viewBox="0 0 25 25"><g fill="none" stroke="#252423" stroke-width="1.2"><circle cx="10.4" cy="10" r="9.6"/><path d="M17.6 16.3 L23.6 22.6" stroke-width="2"/><path d="M1.3 10.8 L5.9 8.4 L9.4 10.6 L17.8 4.8"/><path d="M5.9 12.2 V18.4 M9.4 12.8 V19.8 M13 12.2 V19.4 M16.9 8.2 V15.6"/></g></svg>
<svg class="b" style="left:1485px;top:135px;" width="181" height="10" viewBox="0 0 181 10"><path d="M0 8.5 H16.5 L24 1.2 L31.5 8.5 H181" fill="none" stroke="#8a8886" stroke-width="1"/></svg>
<svg class="b" style="left:1496px;top:155px;" width="18" height="18" viewBox="0 0 18 18"><path d="M1.5 0.5 V17.5 H18" fill="none" stroke="#323130" stroke-width="1" /><rect x="1.5" y="2.5" width="5" height="3.5" fill="#ffffff" stroke="#323130" stroke-width="0.8"/><rect x="6" y="2.5" width="6" height="3.5" fill="#86bbec" stroke="#1369bd" stroke-width="1"/><rect x="1.5" y="10.5" width="8" height="3.5" fill="#ffffff" stroke="#323130" stroke-width="0.8"/><rect x="9" y="10.5" width="7" height="3.5" fill="#c8c6c4" stroke="#8a8886" stroke-width="1"/></svg>
<svg class="b" style="left:1524px;top:155px;" width="18" height="18" viewBox="0 0 18 18"><path d="M1.5 0.5 V17.5 H18" fill="none" stroke="#323130" stroke-width="1" /><rect x="4.5" y="6" width="3.5" height="6" fill="#86bbec" stroke="#1369bd" stroke-width="1"/><rect x="4.5" y="12" width="3.5" height="5.5" fill="#ffffff" stroke="#323130" stroke-width="0.8"/><rect x="12.5" y="2.5" width="3.5" height="8" fill="#c8c6c4" stroke="#8a8886" stroke-width="1"/><rect x="12.5" y="10.5" width="3.5" height="7" fill="#ffffff" stroke="#323130" stroke-width="0.8"/></svg>
<svg class="b" style="left:1552px;top:155px;" width="18" height="18" viewBox="0 0 18 18"><path d="M1.5 0.5 V17.5 H18" fill="none" stroke="#323130" stroke-width="1.6" /><rect x="1.5" y="1" width="15.5" height="3" fill="#86bbec" stroke="#1369bd" stroke-width="1.2"/><rect x="1.5" y="5" width="9" height="2.5" fill="#ffffff" stroke="#323130" stroke-width="0.9"/><rect x="1.5" y="8.5" width="6.5" height="2.5" fill="#c8c6c4" stroke="#8a8886" stroke-width="1"/><rect x="1.5" y="12" width="12" height="3" fill="#ffffff" stroke="#323130" stroke-width="0.9"/></svg>
<svg class="b" style="left:1580px;top:155px;" width="18" height="18" viewBox="0 0 18 18"><path d="M1.5 0.5 V17.5 H18" fill="none" stroke="#323130" stroke-width="1.6" /><rect x="1.5" y="1.5" width="4" height="16" fill="#86bbec" stroke="#1369bd" stroke-width="1.2"/><rect x="6" y="8" width="2.5" height="9.5" fill="#ffffff" stroke="#323130" stroke-width="0.9"/><rect x="9.5" y="10" width="2.5" height="7.5" fill="#c8c6c4" stroke="#8a8886" stroke-width="1"/><rect x="13.5" y="6" width="3" height="11.5" fill="#ffffff" stroke="#323130" stroke-width="0.9"/></svg>
<svg class="b" style="left:1608px;top:155px;" width="18" height="18" viewBox="0 0 18 18"><path d="M1.5 0.5 V17.5 H18" fill="none" stroke="#323130" stroke-width="1" /><rect x="1.5" y="2.5" width="4" height="3.5" fill="#ffffff" stroke="#323130" stroke-width="0.8"/><rect x="5.5" y="2.5" width="10.5" height="3.5" fill="#86bbec" stroke="#1369bd" stroke-width="1"/><rect x="1.5" y="10.5" width="9" height="3.5" fill="#ffffff" stroke="#323130" stroke-width="0.8"/><rect x="10.5" y="10.5" width="5.5" height="3.5" fill="#c8c6c4" stroke="#8a8886" stroke-width="1"/></svg>
<svg class="b" style="left:1636px;top:155px;" width="18" height="18" viewBox="0 0 18 18"><path d="M1.5 0.5 V17.5 H18" fill="none" stroke="#323130" stroke-width="1" /><rect x="3.5" y="2.5" width="3.5" height="11" fill="#86bbec" stroke="#1369bd" stroke-width="1"/><rect x="3.5" y="13.5" width="3.5" height="4" fill="#ffffff" stroke="#323130" stroke-width="0.8"/><rect x="11.5" y="2.5" width="3.5" height="5" fill="#c8c6c4" stroke="#8a8886" stroke-width="1"/><rect x="11.5" y="7.5" width="3.5" height="10" fill="#ffffff" stroke="#323130" stroke-width="0.8"/></svg>
<svg class="b" style="left:1496px;top:183px;" width="18" height="18" viewBox="0 0 18 18"><path d="M1.5 0.5 V17.5 H18" fill="none" stroke="#323130" stroke-width="1" /><path d="M1 14 L6 8 L10.5 12 L17 6" fill="none" stroke="#323130" stroke-width="1.2" /><path d="M1 15.5 L11 3 L17 10" fill="none" stroke="#1369bd" stroke-width="1.2" /></svg>
<svg class="b" style="left:1524px;top:183px;" width="18" height="18" viewBox="0 0 18 18"><path d="M1.5 0.5 V17.5 H18" fill="none" stroke="#323130" stroke-width="1" /><path d="M0.5 17 V12 L5 17 Z" fill="#86bbec" stroke="#1369bd" stroke-width="1" /><path d="M0.5 12 L6 1.5 L10 8 L5 16" fill="#ffffff" stroke="#323130" stroke-width="1" /><path d="M10 8 L13 0.5 L17.5 9 V17 H0.5 L5 16 Z" fill="none" stroke="none" stroke-width="1" /><path d="M12.5 1 L17.5 8 V17 L12 12 Z" fill="#c8c6c4" stroke="#8a8886" stroke-width="1" /><path d="M0.5 17 L5 12.5 L10 8 L17 17 Z" fill="#86bbec" stroke="#1369bd" stroke-width="1" /></svg>
<svg class="b" style="left:1552px;top:183px;" width="18" height="18" viewBox="0 0 18 18"><path d="M1.5 0.5 V17.5 H18" fill="none" stroke="#323130" stroke-width="1" /><path d="M1 4 L6 9 L11 3 L13 6 H17.5 V13 L11 9 L6 14 L1 9 Z" fill="#86bbec" stroke="#1369bd" stroke-width="1.2" /></svg>
<svg class="b" style="left:1580px;top:183px;" width="18" height="18" viewBox="0 0 18 18"><path d="M1.5 0.5 V17.5 H18" fill="none" stroke="#323130" stroke-width="1" /><rect x="3.5" y="2.5" width="3" height="10" fill="#86bbec" stroke="#1369bd" stroke-width="1"/><rect x="11.5" y="2.5" width="3" height="5" fill="#c8c6c4" stroke="#8a8886" stroke-width="1"/><rect x="11.5" y="7.5" width="3" height="10" fill="#ffffff" stroke="#323130" stroke-width="0.8"/><path d="M1 16.5 L6 10 L10 14 L17.5 6" fill="none" stroke="#323130" stroke-width="1.1" /></svg>
<svg class="b" style="left:1608px;top:183px;" width="18" height="18" viewBox="0 0 18 18"><path d="M1.5 0.5 V17.5 H18" fill="none" stroke="#323130" stroke-width="1" /><rect x="4" y="8" width="3" height="9.5" fill="#86bbec" stroke="#1369bd" stroke-width="1"/><rect x="8" y="1.5" width="3" height="16" fill="#ffffff" stroke="#323130" stroke-width="0.8"/><rect x="12" y="5" width="3" height="12.5" fill="#c8c6c4" stroke="#8a8886" stroke-width="1"/><path d="M1 16.5 L6 10 L10 14 L17.5 6" fill="none" stroke="#323130" stroke-width="1.1" /></svg>
<svg class="b" style="left:1636px;top:183px;" width="18" height="18" viewBox="0 0 18 18"><path d="M1.5 0.5 V17.5 H18" fill="none" stroke="#323130" stroke-width="1" /><path d="M2 2 Q9 9 17 2 V6 Q9 13 2 6 Z" fill="#c8c6c4" stroke="#8a8886" stroke-width="1" /><path d="M2 7 Q9 15 17 7 V10 Q9 18 2 10 Z" fill="#86bbec" stroke="#1369bd" stroke-width="1" /><rect x="2" y="12" width="3" height="3" fill="#e8891e" stroke="#c96a0b" stroke-width="0.6"/><rect x="14" y="12" width="3" height="3" fill="#e8891e" stroke="#c96a0b" stroke-width="0.6"/><rect x="8" y="8" width="3" height="2.5" fill="#e8891e" stroke="#c96a0b" stroke-width="0.6"/></svg>
<svg class="b" style="left:1496px;top:211px;" width="18" height="18" viewBox="0 0 18 18"><path d="M1.5 0.5 V17.5 H18" fill="none" stroke="#323130" stroke-width="1" /><rect x="2.5" y="10" width="3" height="7.5" fill="#ffffff" stroke="#323130" stroke-width="0.8"/><rect x="5.5" y="9" width="3" height="8.5" fill="#c8c6c4" stroke="#8a8886" stroke-width="1"/><rect x="8.5" y="2" width="3" height="9" fill="#86bbec" stroke="#1369bd" stroke-width="1"/><rect x="8.5" y="11" width="3" height="6.5" fill="#ffffff" stroke="#323130" stroke-width="0.8"/><rect x="11.5" y="2" width="3" height="15.5" fill="#ffffff" stroke="#323130" stroke-width="0.8"/><rect x="14.5" y="2" width="3" height="15.5" fill="#ffffff" stroke="#323130" stroke-width="0.8"/></svg>
<svg class="b" style="left:1524px;top:211px;" width="18" height="18" viewBox="0 0 18 18"><rect x="1.5" y="1.5" width="15" height="3.5" fill="#86bbec" stroke="#1369bd" stroke-width="1.2"/><rect x="3.5" y="5" width="11" height="4" fill="#86bbec" stroke="#1369bd" stroke-width="1.2"/><rect x="5.5" y="9" width="7" height="4" fill="#86bbec" stroke="#1369bd" stroke-width="1.2"/></svg>
<svg class="b" style="left:1552px;top:211px;" width="18" height="18" viewBox="0 0 18 18"><path d="M1.5 0.5 V17.5 H18" fill="none" stroke="#323130" stroke-width="1" /><rect x="3" y="4" width="2.5" height="2.5" fill="#86bbec" stroke="none" stroke-width="1"/><rect x="6.5" y="8" width="2.5" height="2.5" fill="#86bbec" stroke="none" stroke-width="1"/><rect x="10" y="12" width="2.5" height="2.5" fill="#86bbec" stroke="none" stroke-width="1"/><rect x="13" y="1" width="2.5" height="2.5" fill="#323130" stroke="none" stroke-width="1"/><rect x="3" y="12" width="2.5" height="2.5" fill="#323130" stroke="none" stroke-width="1"/></svg>
<svg class="b" style="left:1580px;top:211px;" width="18" height="18" viewBox="0 0 18 18"><circle cx="9" cy="9" r="8.2" fill="#f8f8f8" stroke="#323130" stroke-width="1"/><path d="M9 9 V0.8 A8.2 8.2 0 0 1 14.8 14.8 Z" fill="#86bbec" stroke="#1369bd" stroke-width="1" /></svg>
<svg class="b" style="left:1608px;top:211px;" width="18" height="18" viewBox="0 0 18 18"><circle cx="9" cy="9" r="7.7" fill="none" stroke="#323130" stroke-width="1"/><circle cx="9" cy="9" r="3.5" fill="none" stroke="#323130" stroke-width="1"/><path d="M9 0.8 A8.2 8.2 0 1 1 0.8 9 H5 A4 4 0 1 0 9 5 Z" fill="#86bbec" stroke="#1369bd" stroke-width="1" /></svg>
<svg class="b" style="left:1636px;top:211px;" width="18" height="18" viewBox="0 0 18 18"><rect x="0.5" y="0.5" width="8" height="17" fill="#86bbec" stroke="#1369bd" stroke-width="1.1"/><path d="M0.5 9 H8.5" fill="none" stroke="#1369bd" stroke-width="1" /><rect x="8.5" y="0.5" width="9" height="17" fill="#ffffff" stroke="#323130" stroke-width="1.1"/><path d="M8.5 6 H17.5 M8.5 11.5 H17.5 M13 6 V17.5" fill="none" stroke="#323130" stroke-width="1" /></svg>
<svg class="b" style="left:1496px;top:239px;" width="18" height="18" viewBox="0 0 18 18"><circle cx="10" cy="8" r="5" fill="#fff" stroke="#323130" stroke-width="1"/><path d="M8 3.8 Q6 5.5 5.8 8.8 L7.6 8.6 L8.3 6.2 Z" fill="#2e9e45" stroke="none" stroke-width="1" /><path d="M10.2 3.2 Q13.5 3.6 14.6 6.8 L11.6 7.6 L10.4 6 Z" fill="#2e9e45" stroke="none" stroke-width="1" /><path d="M8.6 9.8 L11.8 9.6 L12 12.6 Q10 13 8.8 12 Z" fill="#2e9e45" stroke="none" stroke-width="1" /><path d="M11.6 0.8 A7.2 7.2 0 1 0 15.6 12.2" fill="none" stroke="#323130" stroke-width="1.1" /><path d="M9.5 15.2 V17.5 M2.2 17.5 H15" fill="none" stroke="#323130" stroke-width="1.1" /></svg>
<svg class="b" style="left:1524px;top:239px;" width="18" height="18" viewBox="0 0 18 18"><path d="M0.3 8.6 L0.3 9 L1.8 12.2 L5.4 15.2 L8.2 16.7 L8.4 8.6 Z" fill="#c8c6c4" stroke="#323130" stroke-width="0.9" /><path d="M8.2 3.4 H10.9 L13 1.4 H17.5 V8.4 H8.4 Z" fill="#c8c6c4" stroke="#323130" stroke-width="0.9" /><path d="M0.3 1.3 H5.7 L7.8 3.4 L8.4 8.4 H0.3 L1.2 5.5 Z" fill="#86bbec" stroke="#1369bd" stroke-width="1.1" /><path d="M10 8.6 H17.5 V12.5 L14.5 14.9 L12.1 15.2 L10.9 14.9 L8.4 16.7 V13.1 L10 11 Z" fill="#86bbec" stroke="#1369bd" stroke-width="1.1" /></svg>
<svg class="b" style="left:1552px;top:239px;" width="18" height="18" viewBox="0 0 18 18"><path d="M0.5 17 L10.5 0.5 L14 18 L9.5 12.5 Z" fill="#3a9fd8" stroke="none" stroke-width="1" /><path d="M10.5 0.5 L14 18 L9.5 12.5 Z" fill="#0f78d4" stroke="none" stroke-width="1" /></svg>
<svg class="b" style="left:1580px;top:239px;" width="18" height="18" viewBox="0 0 18 18"><path d="M1 14 A8 8 0 0 1 17 14 H14 A5 5 0 0 0 4 14 Z" fill="#ffffff" stroke="#323130" stroke-width="1" /><path d="M9 6 A8 8 0 0 1 17 14 H14 A5 5 0 0 0 9 9 Z" fill="#86bbec" stroke="#1369bd" stroke-width="1" /><path d="M9 13.5 L12.5 9" fill="none" stroke="#323130" stroke-width="1.5" /></svg>
<svg class="b" style="left:1608px;top:239px;" width="18" height="18" viewBox="0 0 18 18"><rect x="0.5" y="2.5" width="17" height="13" fill="#ffffff" stroke="#323130" stroke-width="1.2"/><text x="9" y="11.5" font-size="8.5" font-family="Liberation Sans" fill="#1369bd" text-anchor="middle">123</text><path d="M2.5 13.5 H15.5" fill="none" stroke="#8a8886" stroke-width="1" /></svg>
<svg class="b" style="left:1636px;top:239px;" width="18" height="18" viewBox="0 0 18 18"><rect x="0.5" y="0.5" width="17" height="17" fill="#ffffff" stroke="#323130" stroke-width="1.2"/><path d="M3 2 V16" fill="none" stroke="#8a8886" stroke-width="1" /><path d="M5 4 H15 M5 10 H15" fill="none" stroke="#1369bd" stroke-width="2" /><path d="M5 7 H9 M5 13 H9" fill="none" stroke="#8a8886" stroke-width="1" /></svg>
<svg class="b" style="left:1496px;top:267px;" width="18" height="18" viewBox="0 0 18 18"><rect x="0.5" y="2" width="17" height="14" fill="#ffffff" stroke="#323130" stroke-width="1.2"/><path d="M2.5 10 L4.5 5 L6.5 10 Z" fill="#7ec98a" stroke="#26a33b" stroke-width="1" /><path d="M9 5 H13 L11 10 Z" fill="#f07a7a" stroke="#d62828" stroke-width="1" /><path d="M2.5 13 H15.5" fill="none" stroke="#8a8886" stroke-width="1" /></svg>
<svg class="b" style="left:1524px;top:267px;" width="18" height="18" viewBox="0 0 18 18"><rect x="0.5" y="1" width="16" height="16" fill="#ffffff" stroke="#323130" stroke-width="1.2"/><rect x="0.5" y="1" width="16" height="2.5" fill="#c8c6c4" stroke="#323130" stroke-width="1"/><rect x="3" y="6" width="2.5" height="2.5" fill="#c8c6c4" stroke="#8a8886" stroke-width="1"/><rect x="3" y="11" width="2.5" height="2.5" fill="#c8c6c4" stroke="#8a8886" stroke-width="1"/><path d="M9.5 10 H17.5 L14.5 13.5 V17 H12.5 V13.5 Z" fill="#ffffff" stroke="#323130" stroke-width="1" /></svg>
<div class="b" style="left:1547.5px;top:263px;width:24px;height:24px;background:#e1dfdd;border:1px solid #8a8886;border-radius:1px;"></div>
<svg class="b" style="left:1552px;top:267px;" width="18" height="18" viewBox="0 0 18 18"><rect x="0.5" y="1" width="17" height="16" fill="#ffffff" stroke="#323130" stroke-width="1.4"/><rect x="0.5" y="1" width="17" height="2.5" fill="#c8c6c4" stroke="#323130" stroke-width="1"/><path d="M0.5 7.5 H17.5 M0.5 12 H17.5 M6 3.5 V17 M12 3.5 V17" fill="none" stroke="#323130" stroke-width="1" /></svg>
<svg class="b" style="left:1580px;top:267px;" width="18" height="18" viewBox="0 0 18 18"><rect x="0.5" y="1" width="17" height="16" fill="#ffffff" stroke="#323130" stroke-width="1.4"/><rect x="0.5" y="1" width="17" height="2.5" fill="#c8c6c4" stroke="#323130" stroke-width="1"/><rect x="12" y="3.5" width="5.5" height="13.5" fill="#86bbec" stroke="none" stroke-width="1"/><rect x="0.5" y="12" width="17" height="5" fill="#86bbec" stroke="none" stroke-width="1"/><path d="M0.5 7.5 H17.5 M0.5 12 H17.5 M6 3.5 V17 M12 3.5 V17" fill="none" stroke="#1369bd" stroke-width="1" /><rect x="0.5" y="1" width="17" height="16" fill="none" stroke="#323130" stroke-width="1.2"/></svg>
<svg class="b" style="left:1608px;top:267px;" width="18" height="18" viewBox="0 0 18 18"><path d="M1.5 0.5 V17.5 H18" fill="none" stroke="#323130" stroke-width="1" /><path d="M1 3 H13 M1 8 H9 M1 13 H6" fill="none" stroke="#1369bd" stroke-width="0.9" /><circle cx="15" cy="3" r="2" fill="#86bbec" stroke="#1369bd"/><rect x="9" y="7" width="2" height="2" fill="#ffffff" stroke="#8a8886" stroke-width="1"/><rect x="6" y="12" width="2" height="2" fill="#ffffff" stroke="#8a8886" stroke-width="1"/></svg>
<svg class="b" style="left:1636px;top:267px;" width="18" height="18" viewBox="0 0 18 18"><rect x="0.5" y="7.5" width="5" height="3.5" fill="#86bbec" stroke="#1369bd" stroke-width="1"/><rect x="11" y="1" width="6.5" height="3" fill="#86bbec" stroke="#1369bd" stroke-width="1"/><rect x="11" y="7.5" width="6.5" height="3" fill="#86bbec" stroke="#1369bd" stroke-width="1"/><rect x="11" y="14" width="6.5" height="3" fill="#86bbec" stroke="#1369bd" stroke-width="1"/><path d="M5.5 9 H11 M9 2.5 V15.5 M9 2.5 H11 M9 15.5 H11" fill="none" stroke="#323130" stroke-width="1" /></svg>
<svg class="b" style="left:1496px;top:295px;" width="18" height="18" viewBox="0 0 18 18"><path d="M0.5 1 H17.5 V12 H5 L2.5 16 V12 H0.5 Z" fill="#fafafa" stroke="#1369bd" stroke-width="1.2" /></svg>
<svg class="b" style="left:1524px;top:295px;" width="18" height="18" viewBox="0 0 18 18"><path d="M2.5 0.5 H11 L15.5 5 V17.5 H2.5 Z" fill="#ffffff" stroke="#323130" stroke-width="1" /><path d="M11 0.5 V5 H15.5" fill="none" stroke="#323130" stroke-width="1" /><rect x="0.5" y="6" width="3" height="2.5" fill="#86bbec" stroke="#1369bd" stroke-width="1"/><path d="M6 8 H12 M5 11 H10" fill="none" stroke="#1369bd" stroke-width="1" /></svg>
<svg class="b" style="left:1552px;top:295px;" width="18" height="18" viewBox="0 0 18 18"><path d="M4 1 H14 V8 A5 5 0 0 1 4 8 Z" fill="#ffffff" stroke="#323130" stroke-width="1" /><path d="M4 3 H1 V6 L4 9 M14 3 H17 V6 L14 9" fill="none" stroke="#323130" stroke-width="1" /><path d="M9 13 V15" fill="none" stroke="#323130" stroke-width="2" /><rect x="5" y="15" width="8" height="2.5" fill="#86bbec" stroke="#1369bd" stroke-width="1"/><path d="M4 1 H14" fill="none" stroke="#1369bd" stroke-width="1.6" /></svg>
<svg class="b" style="left:1580px;top:295px;" width="18" height="18" viewBox="0 0 18 18"><path d="M1.5 0.5 H11 L15.5 5 V17.5 H1.5 Z" fill="#f3f3f3" stroke="#323130" stroke-width="1.1" /><path d="M11 0.5 V5 H15.5" fill="none" stroke="#323130" stroke-width="1" /><rect x="4" y="11" width="1.8" height="5" fill="#323130" stroke="none" stroke-width="1"/><rect x="7" y="13" width="1.8" height="3" fill="#323130" stroke="none" stroke-width="1"/><rect x="10" y="8" width="1.8" height="8" fill="#323130" stroke="none" stroke-width="1"/></svg>
<svg class="b" style="left:1608px;top:295px;" width="18" height="18" viewBox="0 0 18 18"><path d="M9 1 L17 9 L9 17 L1 9 Z" fill="none" stroke="#8a33b5" stroke-width="1.2" /><path d="M5 5 L13 13 M13 5 L5 13" fill="none" stroke="#8a33b5" stroke-width="1.1" /><path d="M9 1 L13 5 L9 9 L5 5 Z" fill="none" stroke="#b46dd6" stroke-width="1" /></svg>
<svg class="b" style="left:1636px;top:295px;" width="18" height="18" viewBox="0 0 18 18"><rect x="5" y="1" width="12.5" height="16" fill="#cfe3f7" stroke="#1369bd" stroke-width="1.3"/><path d="M9 17 Q10 10 17 6" fill="none" stroke="#6aa6e0" stroke-width="3" /><path d="M0.5 1 H6 V8 L3.3 11 L0.5 8 Z" fill="#d9700f" stroke="#c95f00" stroke-width="1" /><circle cx="3.3" cy="4" r="1.2" fill="#fff"/><circle cx="15" cy="15" r="2.5" fill="#d9700f"/><rect x="15.5" y="9" width="2.5" height="2.5" fill="#d9700f"/></svg>
<svg class="b" style="left:1496px;top:323px;" width="18" height="18" viewBox="0 0 18 18"><path d="M0.5 1.5 H9 L17 9 L9 16.5 H0.5 L8 9 Z" fill="#fafafa" stroke="#1e88e5" stroke-width="1.2" /><path d="M5 16 L12.5 8.5 M9 1.5 L3.5 7" fill="none" stroke="#1e88e5" stroke-width="1.2" /></svg>
<svg class="b" style="left:1524px;top:323px;" width="18" height="18" viewBox="0 0 18 18"><rect x="1.5" y="7" width="2" height="2" fill="#c8531a"/><rect x="6.5" y="7" width="2" height="2" fill="#1c5fa8"/><rect x="11.5" y="7" width="2" height="2" fill="#c8531a"/></svg>
<div class="b" style="left:1491px;top:348px;width:168px;height:1px;background-image:linear-gradient(to right,#c8c6c4 0,#c8c6c4 4px,transparent 4px);background-size:7px 1px;"></div>
<svg width="0" height="0" style="position:absolute"><defs><linearGradient id="rb"><stop offset="0" stop-color="#e53935"/><stop offset="0.3" stop-color="#fdd835"/><stop offset="0.6" stop-color="#43a047"/><stop offset="1" stop-color="#1e88e5"/></linearGradient></defs></svg>
<svg class="b" style="left:1495.5px;top:356px;" width="18" height="18" viewBox="0 0 18 18"><text x="0" y="8" font-size="9" font-family="Liberation Serif" fill="#b3cde8">T</text><text x="9" y="18" font-size="10" font-weight="700" font-family="Liberation Sans" fill="#e07b2c">T</text><path d="M9 2 A4 4 0 0 1 13 6 M12 5 L13 6.5 L14 5" fill="none" stroke="#b3cde8" stroke-width="1" /><path d="M3 11 A4 4 0 0 0 7 15" fill="none" stroke="#e8e8e8" stroke-width="1" /></svg>
<svg class="b" style="left:1523.5px;top:356px;" width="18" height="18" viewBox="0 0 18 18"><rect x="0" y="0" width="18" height="18" fill="#3a3a3a" stroke="none" stroke-width="1"/><text x="9" y="8" font-size="8" font-family="Liberation Sans" fill="#fff" text-anchor="middle">A</text><text x="9" y="16.5" font-size="8" font-family="Liberation Sans" fill="#fff" text-anchor="middle">Z</text></svg>
<svg class="b" style="left:1551.5px;top:356px;" width="18" height="18" viewBox="0 0 18 18"><path d="M0.5 0.5 V17.5 H18" fill="none" stroke="#ccc" stroke-width="1" /><circle cx="3" cy="13" r="1.5" fill="#5ed35e"/><circle cx="8" cy="13" r="1.5" fill="#5ed35e"/><circle cx="13" cy="8" r="1.5" fill="#5ed35e"/><circle cx="16" cy="2" r="1.5" fill="#5ed35e"/><path d="M5 1 L7 3 M7 1 L5 3" fill="none" stroke="#e03030" stroke-width="1" /></svg>
<svg class="b" style="left:1579.5px;top:356px;" width="18" height="18" viewBox="0 0 18 18"><path d="M0.5 1.5 H17.5 M0.5 16.5 H17.5" fill="none" stroke="#555" stroke-width="1.4" /><rect x="1" y="5" width="15" height="7" fill="#74c26a" stroke="#555" stroke-width="0.8"/><rect x="4" y="3" width="2" height="11" fill="#555" stroke="none" stroke-width="1"/></svg>
<svg class="b" style="left:1607.5px;top:356px;" width="18" height="18" viewBox="0 0 18 18"><rect x="1" y="2" width="13" height="13" fill="#fff" stroke="#3a8ee6" stroke-width="1.3"/><rect x="4" y="7" width="2" height="6" fill="#d9a420" stroke="none" stroke-width="1"/><rect x="7" y="4" width="2" height="9" fill="#d9a420" stroke="none" stroke-width="1"/><rect x="10" y="6" width="2" height="7" fill="#d9a420" stroke="none" stroke-width="1"/><path d="M8 16 L16 8" fill="none" stroke="#3cb371" stroke-width="2.2" /></svg>
<svg class="b" style="left:1635.5px;top:356px;" width="18" height="18" viewBox="0 0 18 18"><rect x="0" y="0" width="18" height="18" fill="#fff" stroke="none" stroke-width="1"/><path d="M1 17 V2 M1 17 H18" fill="none" stroke="#888" stroke-width="1" /><path d="M2 15 L7 10 L11 13 L17 7" fill="none" stroke="#e37b3d" stroke-width="1" /><path d="M2 12 L7 8 L11 11 L17 5" fill="none" stroke="#3f8fd6" stroke-width="1" /><path d="M5 1 L6.5 3.5 L3.5 3.5 Z" fill="#2aa198" stroke="none" stroke-width="1" /><path d="M12 1 H15 L13.5 3.5 Z" fill="#e05050" stroke="none" stroke-width="1" /></svg>
<svg class="b" style="left:1495.5px;top:384px;" width="18" height="18" viewBox="0 0 18 18"><rect x="0" y="2" width="18" height="16" fill="#fff" stroke="none" stroke-width="1"/><rect x="0" y="2" width="18" height="3.5" fill="#4f9ee0" stroke="none" stroke-width="1"/><rect x="2" y="8" width="3" height="3" fill="#5a9e8a" stroke="none" stroke-width="1"/><rect x="2" y="13" width="3" height="3" fill="#5a9e8a" stroke="none" stroke-width="1"/><rect x="12" y="8" width="3" height="3" fill="#f06b3c" stroke="none" stroke-width="1"/><rect x="12" y="13" width="3" height="3" fill="#f06b3c" stroke="none" stroke-width="1"/><circle cx="3" cy="1.5" r="1" fill="#4f9ee0"/><circle cx="9" cy="1.5" r="1" fill="#4f9ee0"/><circle cx="15" cy="1.5" r="1" fill="#4f9ee0"/></svg>
<svg class="b" style="left:1523.5px;top:384px;" width="18" height="18" viewBox="0 0 18 18"><rect x="0" y="0" width="18" height="18" fill="#fff" stroke="none" stroke-width="1"/><rect x="2" y="4" width="2.5" height="12" fill="#222" stroke="none" stroke-width="1"/><path d="M0 17 H6" fill="none" stroke="#222" stroke-width="1.5" /><circle cx="4" cy="1.5" r="1.3" fill="#e03030"/><rect x="1" y="2" width="2" height="3" fill="#7dd36a" stroke="none" stroke-width="1"/><rect x="7" y="8" width="1.5" height="8" fill="#333" stroke="none" stroke-width="1"/><rect x="9.5" y="10" width="1.5" height="6" fill="#333" stroke="none" stroke-width="1"/><rect x="12" y="12" width="1.5" height="5" fill="#333" stroke="none" stroke-width="1"/><rect x="14.5" y="7" width="2" height="3" fill="#222" stroke="none" stroke-width="1"/></svg>
<svg class="b" style="left:1551.5px;top:384px;" width="18" height="18" viewBox="0 0 18 18"><rect x="0" y="0" width="18" height="18" fill="#f3f3f3" stroke="none" stroke-width="1"/><path d="M1.5 1 V15 M6.5 1 V15 M11.5 1 V15" fill="none" stroke="#999" stroke-width="1" /><rect x="2" y="4" width="3" height="1.5" fill="#bbb" stroke="none" stroke-width="1"/><rect x="7" y="4" width="3" height="1.5" fill="#7dcf6e" stroke="none" stroke-width="1"/><rect x="7" y="8" width="3" height="1.5" fill="#7dcf6e" stroke="none" stroke-width="1"/><rect x="12" y="6" width="3" height="1.5" fill="#bbb" stroke="none" stroke-width="1"/><rect x="0" y="16" width="18" height="2" fill="url(#rb)"/></svg>
<svg class="b" style="left:1579.5px;top:384px;" width="18" height="18" viewBox="0 0 18 18"><rect x="0" y="0" width="8.5" height="8.5" fill="#fff" stroke="none" stroke-width="1"/><rect x="9.5" y="0" width="8.5" height="8.5" fill="#fff" stroke="none" stroke-width="1"/><rect x="0" y="9.5" width="8.5" height="8.5" fill="#fff" stroke="none" stroke-width="1"/><rect x="9.5" y="9.5" width="8.5" height="8.5" fill="#fff" stroke="none" stroke-width="1"/><path d="M1 4 L3 3 L5 4.5 L7.5 3.5 M10.5 5 L13 4 L15 5 L17.5 4 M1 15 L4 15 L7.5 14.5 M10.5 14 L12 12 L14 15 L17.5 14" fill="none" stroke="#e05a5a" stroke-width="0.8" /></svg>
<svg class="b" style="left:1607.5px;top:384px;" width="18" height="18" viewBox="0 0 18 18"><rect x="0" y="0" width="18" height="18" fill="#0e6f7a" stroke="none" stroke-width="1"/><rect x="2" y="5" width="14" height="3" fill="#d9e4e6" stroke="none" stroke-width="1"/><rect x="11" y="5" width="5" height="3" fill="#6cc5d8" stroke="none" stroke-width="1"/><rect x="2" y="11" width="14" height="3" fill="#d9e4e6" stroke="none" stroke-width="1"/><rect x="2" y="11" width="5" height="3" fill="#e0287a" stroke="none" stroke-width="1"/></svg>
<svg class="b" style="left:1635.5px;top:384px;" width="18" height="18" viewBox="0 0 18 18"><path d="M0 1.5 H18 M0 16.5 H18" fill="none" stroke="#444" stroke-width="1.2" /><path d="M0 6.5 H18 M0 11.5 H18" fill="none" stroke="#444" stroke-width="2" /><path d="M6 6.5 V11.5 M12 6.5 V11.5" fill="none" stroke="#444" stroke-width="1.2" /></svg>
<svg class="b" style="left:1495.5px;top:412.5px;" width="18" height="18" viewBox="0 0 18 18"><rect x="0" y="1" width="18" height="16" fill="#fff" stroke="none" stroke-width="1"/><rect x="0" y="2" width="18" height="5" fill="#7fb08d" stroke="none" stroke-width="1"/><rect x="0" y="2" width="12" height="5" fill="#e8c08a" stroke="none" stroke-width="1"/><rect x="0" y="3.5" width="7" height="2" fill="#e05a3a" stroke="none" stroke-width="1"/><rect x="0" y="9" width="18" height="5" fill="#7fb08d" stroke="none" stroke-width="1"/><rect x="0" y="9" width="11" height="5" fill="#e8c08a" stroke="none" stroke-width="1"/><rect x="0" y="10.5" width="8" height="2" fill="#e05a3a" stroke="none" stroke-width="1"/><path d="M1 16 V18 M7 16 V18 M13 16 V18" fill="none" stroke="#555" stroke-width="1" /></svg>
<svg class="b" style="left:1523.5px;top:412.5px;" width="18" height="18" viewBox="0 0 18 18"><rect x="0.5" y="1" width="17" height="16.5" fill="#f3f3f3" stroke="#aaa" stroke-width="1"/><rect x="3" y="6" width="3.5" height="3.5" fill="#f4a582" stroke="none" stroke-width="1"/><rect x="7" y="6" width="3.5" height="3.5" fill="#9b59b6" stroke="none" stroke-width="1"/><rect x="11" y="6" width="3.5" height="3.5" fill="#2ec4d6" stroke="none" stroke-width="1"/><rect x="3" y="10.5" width="3.5" height="3.5" fill="#2ec4d6" stroke="none" stroke-width="1"/><rect x="7" y="10.5" width="3.5" height="3.5" fill="#bbb" stroke="none" stroke-width="1"/><rect x="11" y="10.5" width="3.5" height="3.5" fill="#f4a582" stroke="none" stroke-width="1"/></svg>
<svg class="b" style="left:1551.5px;top:412.5px;" width="18" height="18" viewBox="0 0 18 18"><rect x="0" y="0" width="18" height="18" fill="#fff" stroke="none" stroke-width="1"/><path d="M0 0.5 H18 M0 6 H18 M0 12 H18 M6 0 V18 M12 0 V18" fill="none" stroke="#bbb" stroke-width="0.8" /><circle cx="9" cy="3.3" r="1.3" fill="#9b59b6"/><path d="M7.5 10 L9 7.5 L10.5 10 Z" fill="#26a69a" stroke="none" stroke-width="1" /><rect x="7.5" y="13.5" width="3" height="3" fill="#f4a582" stroke="none" stroke-width="1"/><path d="M13 5 L17 2 M13 10 Q15 8 17 10 M13 17 L17 13" fill="none" stroke="#e03a7a" stroke-width="0.8" /></svg>
<svg class="b" style="left:1579.5px;top:412.5px;" width="18" height="18" viewBox="0 0 18 18"><path d="M7 0 V18" fill="none" stroke="#333" stroke-width="1.5" /><path d="M7.5 1 H12 L15 4 L12 7 H7.5 Z" fill="#7dc242" stroke="none" stroke-width="1" /><path d="M7 6 H3 L0.5 9 L3 12 H7 Z" fill="#e8461e" stroke="none" stroke-width="1" /><rect x="9" y="10" width="1.5" height="6" fill="#333" stroke="none" stroke-width="1"/><rect x="11.5" y="11" width="1.5" height="6" fill="#333" stroke="none" stroke-width="1"/><rect x="14" y="13" width="1.5" height="5" fill="#333" stroke="none" stroke-width="1"/></svg>
<svg class="b" style="left:1607.5px;top:412.5px;" width="18" height="18" viewBox="0 0 18 18"><rect x="2" y="1.5" width="8" height="3.5" fill="#e56b6b" stroke="none" stroke-width="1"/><rect x="2" y="3" width="6" height="1" fill="#4fa586" stroke="none" stroke-width="1"/><path d="M13 1 V5.5" fill="none" stroke="#888" stroke-width="1.5" /><rect x="2" y="10" width="14" height="5" fill="#4fa586" stroke="none" stroke-width="1"/><rect x="2" y="12" width="12" height="1.5" fill="#e56b6b" stroke="none" stroke-width="1"/></svg>
<div class="b" style="left:1485px;top:439px;width:180px;height:1px;background:#e1dfdd;"></div>
<div class="b" style="left:1659.3px;top:442px;width:5.8px;height:250px;background:#c8c6c4;border-radius:3px;"></div>
<div class="t" style="left:1496.8px;top:450.7px;font-size:12.5px;color:#252423;font-weight:400;letter-spacing:-0.35px;">Columns</div>
<div class="b" style="left:1489.5px;top:470px;width:169.5px;height:330px;background:#ffffff;border:1px dashed #c8c6c4;"></div>
<div class="b" style="left:1492.3px;top:474.3px;width:163.4px;height:22.2px;background:#edebe9;border:1px solid #d2d0ce;border-radius:3px;"></div>
<div class="t" style="left:1497.3px;top:479.7px;font-size:12px;color:#323130;font-weight:400;letter-spacing:-0.12px;">Prod #</div>
<svg class="b" style="left:1626.8px;top:483.0px;" width="8.5" height="5" viewBox="0 0 8.5 5"><path d="M0.5 0.5 L4.2 4.2 L7.9 0.5" fill="none" stroke="#3b3a39" stroke-width="1"/></svg>
<svg class="b" style="left:1643.7px;top:482.2px;" width="6.5" height="6.5" viewBox="0 0 6.5 6.5"><path d="M0.5 0.5 L6 6 M6 0.5 L0.5 6" fill="none" stroke="#605e5c" stroke-width="0.9"/></svg>
<div class="b" style="left:1492.3px;top:499.3px;width:163.4px;height:22.2px;background:#edebe9;border:1px solid #d2d0ce;border-radius:3px;"></div>
<div class="t" style="left:1497.3px;top:504.7px;font-size:12px;color:#323130;font-weight:400;letter-spacing:-0.12px;">Production end date</div>
<svg class="b" style="left:1626.8px;top:508.0px;" width="8.5" height="5" viewBox="0 0 8.5 5"><path d="M0.5 0.5 L4.2 4.2 L7.9 0.5" fill="none" stroke="#3b3a39" stroke-width="1"/></svg>
<svg class="b" style="left:1643.7px;top:507.2px;" width="6.5" height="6.5" viewBox="0 0 6.5 6.5"><path d="M0.5 0.5 L6 6 M6 0.5 L0.5 6" fill="none" stroke="#605e5c" stroke-width="0.9"/></svg>
<div class="b" style="left:1492.3px;top:524.3px;width:163.4px;height:22.2px;background:#edebe9;border:1px solid #d2d0ce;border-radius:3px;"></div>
<div class="t" style="left:1497.3px;top:529.7px;font-size:12px;color:#323130;font-weight:400;letter-spacing:-0.12px;">Resource name</div>
<svg class="b" style="left:1626.8px;top:533.0px;" width="8.5" height="5" viewBox="0 0 8.5 5"><path d="M0.5 0.5 L4.2 4.2 L7.9 0.5" fill="none" stroke="#3b3a39" stroke-width="1"/></svg>
<svg class="b" style="left:1643.7px;top:532.1999999999999px;" width="6.5" height="6.5" viewBox="0 0 6.5 6.5"><path d="M0.5 0.5 L6 6 M6 0.5 L0.5 6" fill="none" stroke="#605e5c" stroke-width="0.9"/></svg>
<div class="b" style="left:1492.3px;top:549.3px;width:163.4px;height:22.2px;background:#edebe9;border:1px solid #d2d0ce;border-radius:3px;"></div>
<div class="t" style="left:1497.3px;top:554.7px;font-size:12px;color:#323130;font-weight:400;letter-spacing:-0.12px;">Operation name</div>
<svg class="b" style="left:1626.8px;top:558.0px;" width="8.5" height="5" viewBox="0 0 8.5 5"><path d="M0.5 0.5 L4.2 4.2 L7.9 0.5" fill="none" stroke="#3b3a39" stroke-width="1"/></svg>
<svg class="b" style="left:1643.7px;top:557.1999999999999px;" width="6.5" height="6.5" viewBox="0 0 6.5 6.5"><path d="M0.5 0.5 L6 6 M6 0.5 L0.5 6" fill="none" stroke="#605e5c" stroke-width="0.9"/></svg>
<div class="b" style="left:1492.3px;top:574.3px;width:163.4px;height:22.2px;background:#edebe9;border:1px solid #d2d0ce;border-radius:3px;"></div>
<div class="t" style="left:1497.3px;top:579.7px;font-size:12px;color:#323130;font-weight:400;letter-spacing:-0.12px;">Op #</div>
<svg class="b" style="left:1626.8px;top:583.0px;" width="8.5" height="5" viewBox="0 0 8.5 5"><path d="M0.5 0.5 L4.2 4.2 L7.9 0.5" fill="none" stroke="#3b3a39" stroke-width="1"/></svg>
<svg class="b" style="left:1643.7px;top:582.1999999999999px;" width="6.5" height="6.5" viewBox="0 0 6.5 6.5"><path d="M0.5 0.5 L6 6 M6 0.5 L0.5 6" fill="none" stroke="#605e5c" stroke-width="0.9"/></svg>
<div class="b" style="left:1492.3px;top:599.3px;width:163.4px;height:22.2px;background:#edebe9;border:1px solid #d2d0ce;border-radius:3px;"></div>
<div class="t" style="left:1497.3px;top:604.7px;font-size:12px;color:#323130;font-weight:400;letter-spacing:-0.12px;">Item #</div>
<svg class="b" style="left:1626.8px;top:608.0px;" width="8.5" height="5" viewBox="0 0 8.5 5"><path d="M0.5 0.5 L4.2 4.2 L7.9 0.5" fill="none" stroke="#3b3a39" stroke-width="1"/></svg>
<svg class="b" style="left:1643.7px;top:607.1999999999999px;" width="6.5" height="6.5" viewBox="0 0 6.5 6.5"><path d="M0.5 0.5 L6 6 M6 0.5 L0.5 6" fill="none" stroke="#605e5c" stroke-width="0.9"/></svg>
<div class="b" style="left:1492.3px;top:624.3px;width:163.4px;height:22.2px;background:#edebe9;border:1px solid #d2d0ce;border-radius:3px;"></div>
<div class="t" style="left:1497.3px;top:629.7px;font-size:12px;color:#323130;font-weight:400;letter-spacing:-0.12px;">Variance % (adjusted)</div>
<svg class="b" style="left:1626.8px;top:633.0px;" width="8.5" height="5" viewBox="0 0 8.5 5"><path d="M0.5 0.5 L4.2 4.2 L7.9 0.5" fill="none" stroke="#3b3a39" stroke-width="1"/></svg>
<svg class="b" style="left:1643.7px;top:632.1999999999999px;" width="6.5" height="6.5" viewBox="0 0 6.5 6.5"><path d="M0.5 0.5 L6 6 M6 0.5 L0.5 6" fill="none" stroke="#605e5c" stroke-width="0.9"/></svg>
<div class="b" style="left:1492.3px;top:649.3px;width:163.4px;height:22.2px;background:#edebe9;border:1px solid #d2d0ce;border-radius:3px;"></div>
<div class="t" style="left:1497.3px;top:654.7px;font-size:12px;color:#323130;font-weight:400;letter-spacing:-0.12px;">Variance % (abs adjus...</div>
<svg class="b" style="left:1626.8px;top:658.0px;" width="8.5" height="5" viewBox="0 0 8.5 5"><path d="M0.5 0.5 L4.2 4.2 L7.9 0.5" fill="none" stroke="#3b3a39" stroke-width="1"/></svg>
<svg class="b" style="left:1643.7px;top:657.1999999999999px;" width="6.5" height="6.5" viewBox="0 0 6.5 6.5"><path d="M0.5 0.5 L6 6 M6 0.5 L0.5 6" fill="none" stroke="#605e5c" stroke-width="0.9"/></svg>
<div class="b" style="left:1492.3px;top:674.3px;width:163.4px;height:22.2px;background:#edebe9;border:1px solid #d2d0ce;border-radius:3px;"></div>
<div class="t" style="left:1497.3px;top:679.7px;font-size:12px;color:#323130;font-weight:400;letter-spacing:-0.12px;">Estimate run hours</div>
<svg class="b" style="left:1626.8px;top:683.0px;" width="8.5" height="5" viewBox="0 0 8.5 5"><path d="M0.5 0.5 L4.2 4.2 L7.9 0.5" fill="none" stroke="#3b3a39" stroke-width="1"/></svg>
<svg class="b" style="left:1643.7px;top:682.1999999999999px;" width="6.5" height="6.5" viewBox="0 0 6.5 6.5"><path d="M0.5 0.5 L6 6 M6 0.5 L0.5 6" fill="none" stroke="#605e5c" stroke-width="0.9"/></svg>
<div class="b" style="left:1492.3px;top:699.3px;width:163.4px;height:22.2px;background:#edebe9;border:1px solid #d2d0ce;border-radius:3px;"></div>
<div class="t" style="left:1497.3px;top:704.7px;font-size:12px;color:#323130;font-weight:400;letter-spacing:-0.12px;">Actual run hours</div>
<svg class="b" style="left:1626.8px;top:708.0px;" width="8.5" height="5" viewBox="0 0 8.5 5"><path d="M0.5 0.5 L4.2 4.2 L7.9 0.5" fill="none" stroke="#3b3a39" stroke-width="1"/></svg>
<svg class="b" style="left:1643.7px;top:707.1999999999999px;" width="6.5" height="6.5" viewBox="0 0 6.5 6.5"><path d="M0.5 0.5 L6 6 M6 0.5 L0.5 6" fill="none" stroke="#605e5c" stroke-width="0.9"/></svg>
<div class="b" style="left:1492.3px;top:724.3px;width:163.4px;height:22.2px;background:#edebe9;border:1px solid #d2d0ce;border-radius:3px;"></div>
<div class="t" style="left:1497.3px;top:729.7px;font-size:12px;color:#323130;font-weight:400;letter-spacing:-0.12px;">Order quantity</div>
<svg class="b" style="left:1626.8px;top:733.0px;" width="8.5" height="5" viewBox="0 0 8.5 5"><path d="M0.5 0.5 L4.2 4.2 L7.9 0.5" fill="none" stroke="#3b3a39" stroke-width="1"/></svg>
<svg class="b" style="left:1643.7px;top:732.1999999999999px;" width="6.5" height="6.5" viewBox="0 0 6.5 6.5"><path d="M0.5 0.5 L6 6 M6 0.5 L0.5 6" fill="none" stroke="#605e5c" stroke-width="0.9"/></svg>
<div class="b" style="left:1492.3px;top:749.3px;width:163.4px;height:22.2px;background:#edebe9;border:1px solid #d2d0ce;border-radius:3px;"></div>
<div class="t" style="left:1497.3px;top:754.7px;font-size:12px;color:#323130;font-weight:400;letter-spacing:-0.12px;">Actual run quantity</div>
<svg class="b" style="left:1626.8px;top:758.0px;" width="8.5" height="5" viewBox="0 0 8.5 5"><path d="M0.5 0.5 L4.2 4.2 L7.9 0.5" fill="none" stroke="#3b3a39" stroke-width="1"/></svg>
<svg class="b" style="left:1643.7px;top:757.1999999999999px;" width="6.5" height="6.5" viewBox="0 0 6.5 6.5"><path d="M0.5 0.5 L6 6 M6 0.5 L0.5 6" fill="none" stroke="#605e5c" stroke-width="0.9"/></svg>
<div class="b" style="left:1492.3px;top:774.3px;width:163.4px;height:22.2px;background:#edebe9;border:1px solid #d2d0ce;border-radius:3px;"></div>
<div class="t" style="left:1497.3px;top:779.7px;font-size:12px;color:#323130;font-weight:400;letter-spacing:-0.12px;">Est run hours (adjusted)</div>
<svg class="b" style="left:1626.8px;top:783.0px;" width="8.5" height="5" viewBox="0 0 8.5 5"><path d="M0.5 0.5 L4.2 4.2 L7.9 0.5" fill="none" stroke="#3b3a39" stroke-width="1"/></svg>
<svg class="b" style="left:1643.7px;top:782.1999999999999px;" width="6.5" height="6.5" viewBox="0 0 6.5 6.5"><path d="M0.5 0.5 L6 6 M6 0.5 L0.5 6" fill="none" stroke="#605e5c" stroke-width="0.9"/></svg>
<div class="b" style="left:1666px;top:42px;width:178px;height:749px;background:#f3f2f1;"></div>
<div class="t" style="left:1674.6px;top:53.7px;font-size:16px;color:#252423;font-weight:700;letter-spacing:-0.55px;">Data</div>
<svg class="b" style="left:1828.5px;top:57.5px;" width="8" height="8" viewBox="0 0 8 8"><path d="M0.7 0.5 L3.9 4 L0.7 7.5 M4 0.5 L7.2 4 L4 7.5" fill="none" stroke="#252423" stroke-width="1.1"/></svg>
<div class="b" style="left:1670.5px;top:87.5px;width:171.2px;height:25.8px;border:1px solid #8a8886;border-radius:2px;"></div>
<svg class="b" style="left:1677.5px;top:93.5px;" width="15" height="14" viewBox="0 0 15 14"><g fill="none" stroke="#3b3a39" stroke-width="1.1"><circle cx="9.5" cy="5" r="4.3"/><path d="M6.5 8 L0.8 13.3"/></g></svg>
<div class="t" style="left:1699.0px;top:95.1px;font-size:13px;color:#605e5c;font-weight:400;letter-spacing:-0.2px;">Search</div>
<div class="b" style="left:1835px;top:258px;width:6.8px;height:346.5px;background:#c8c6c4;border-radius:3px;"></div>
<svg class="b" style="left:1677px;top:136.60000000000002px;" width="5" height="9" viewBox="0 0 5 9"><path d="M0.6 0.6 L4.2 4.3 L0.6 8" fill="none" stroke="#605e5c" stroke-width="1"/></svg>
<svg class="b" style="left:1689.3px;top:134.60000000000002px;" width="17" height="17" viewBox="0 0 17 17"><g fill="none" stroke="#323130" stroke-width="1.1"><rect x="0.6" y="0.6" width="11" height="11" rx="2"/><path d="M4.2 0.6 V11.6 M8 0.6 V11.6 M0.6 4.2 H11.6 M0.6 8 H11.6"/></g><circle cx="11.5" cy="11" r="5.6" fill="#117865" stroke="#f3f2f1" stroke-width="0.8"/><path d="M9 11 L10.8 12.8 L14 9.5" fill="none" stroke="#fff" stroke-width="1.3"/></svg>
<div class="t" style="left:1707.0px;top:135.0px;font-size:12.5px;color:#323130;font-weight:400;letter-spacing:-0.3px;">Product</div>
<svg class="b" style="left:1677px;top:160.60000000000002px;" width="5" height="9" viewBox="0 0 5 9"><path d="M0.6 0.6 L4.2 4.3 L0.6 8" fill="none" stroke="#605e5c" stroke-width="1"/></svg>
<svg class="b" style="left:1689.3px;top:158.60000000000002px;" width="17" height="17" viewBox="0 0 17 17"><g fill="none" stroke="#323130" stroke-width="1.1"><rect x="0.6" y="0.6" width="11" height="11" rx="2"/><path d="M4.2 0.6 V11.6 M8 0.6 V11.6 M0.6 4.2 H11.6 M0.6 8 H11.6"/></g><circle cx="11.5" cy="11" r="5.6" fill="#117865" stroke="#f3f2f1" stroke-width="0.8"/><path d="M9 11 L10.8 12.8 L14 9.5" fill="none" stroke="#fff" stroke-width="1.3"/></svg>
<div class="t" style="left:1707.0px;top:159.0px;font-size:12.5px;color:#323130;font-weight:400;letter-spacing:-0.3px;">Production</div>
<svg class="b" style="left:1677px;top:184.60000000000002px;" width="5" height="9" viewBox="0 0 5 9"><path d="M0.6 0.6 L4.2 4.3 L0.6 8" fill="none" stroke="#605e5c" stroke-width="1"/></svg>
<svg class="b" style="left:1689.3px;top:182.60000000000002px;" width="17" height="17" viewBox="0 0 17 17"><g fill="none" stroke="#323130" stroke-width="1.1"><rect x="0.6" y="0.6" width="11" height="11" rx="2"/><path d="M4.2 0.6 V11.6 M8 0.6 V11.6 M0.6 4.2 H11.6 M0.6 8 H11.6"/></g></svg>
<div class="t" style="left:1707.0px;top:183.0px;font-size:12.5px;color:#323130;font-weight:400;letter-spacing:-0.3px;">Production BOM</div>
<svg class="b" style="left:1677px;top:208.60000000000002px;" width="5" height="9" viewBox="0 0 5 9"><path d="M0.6 0.6 L4.2 4.3 L0.6 8" fill="none" stroke="#605e5c" stroke-width="1"/></svg>
<svg class="b" style="left:1689.3px;top:206.60000000000002px;" width="17" height="17" viewBox="0 0 17 17"><g fill="none" stroke="#323130" stroke-width="1.1"><rect x="0.6" y="0.6" width="11" height="11" rx="2"/><path d="M4.2 0.6 V11.6 M8 0.6 V11.6 M0.6 4.2 H11.6 M0.6 8 H11.6"/></g></svg>
<div class="t" style="left:1707.0px;top:207.0px;font-size:12.5px;color:#323130;font-weight:400;letter-spacing:-0.3px;">Production create date</div>
<svg class="b" style="left:1677px;top:232.60000000000002px;" width="5" height="9" viewBox="0 0 5 9"><path d="M0.6 0.6 L4.2 4.3 L0.6 8" fill="none" stroke="#605e5c" stroke-width="1"/></svg>
<svg class="b" style="left:1689.3px;top:230.60000000000002px;" width="17" height="17" viewBox="0 0 17 17"><g fill="none" stroke="#323130" stroke-width="1.1"><rect x="0.6" y="0.6" width="11" height="11" rx="2"/><path d="M4.2 0.6 V11.6 M8 0.6 V11.6 M0.6 4.2 H11.6 M0.6 8 H11.6"/></g><circle cx="11.5" cy="11" r="5.6" fill="#117865" stroke="#f3f2f1" stroke-width="0.8"/><path d="M9 11 L10.8 12.8 L14 9.5" fill="none" stroke="#fff" stroke-width="1.3"/></svg>
<div class="t" style="left:1707.0px;top:231.0px;font-size:12.5px;color:#323130;font-weight:400;letter-spacing:-0.3px;">Production end date</div>
<svg class="b" style="left:1675.2px;top:258.3px;" width="9" height="5" viewBox="0 0 9 5"><path d="M0.6 0.6 L4.3 4.2 L8 0.6" fill="none" stroke="#605e5c" stroke-width="1"/></svg>
<svg class="b" style="left:1689.3px;top:254.60000000000002px;" width="17" height="17" viewBox="0 0 17 17"><g fill="none" stroke="#323130" stroke-width="1.1"><rect x="0.6" y="0.6" width="11" height="11" rx="2"/><path d="M4.2 0.6 V11.6 M8 0.6 V11.6 M0.6 4.2 H11.6 M0.6 8 H11.6"/></g><circle cx="11.5" cy="11" r="5.6" fill="#117865" stroke="#f3f2f1" stroke-width="0.8"/><path d="M9 11 L10.8 12.8 L14 9.5" fill="none" stroke="#fff" stroke-width="1.3"/></svg>
<div class="t" style="left:1707.0px;top:255.0px;font-size:12.5px;color:#323130;font-weight:400;letter-spacing:-0.3px;">Production fact</div>
<svg class="b" style="left:1692px;top:280.6px;" width="5" height="9" viewBox="0 0 5 9"><path d="M0.6 0.6 L4.2 4.3 L0.6 8" fill="none" stroke="#605e5c" stroke-width="1"/></svg>
<svg class="b" style="left:1702.7px;top:278.8px;" width="15" height="12" viewBox="0 0 15 12"><path d="M0.6 2 a1.4 1.4 0 0 1 1.4 -1.4 H5.5 L7.2 2.2 H12.5 a1.4 1.4 0 0 1 1.4 1.4 V9.6 a1.4 1.4 0 0 1 -1.4 1.4 H2 a1.4 1.4 0 0 1 -1.4 -1.4 Z M0.6 4 H5.5 L7.2 2.2" fill="none" stroke="#323130" stroke-width="1.1"/></svg>
<div class="t" style="left:1721.5px;top:279.0px;font-size:12.5px;color:#323130;font-weight:400;letter-spacing:-0.3px;">_Completed status</div>
<svg class="b" style="left:1692px;top:304.6px;" width="5" height="9" viewBox="0 0 5 9"><path d="M0.6 0.6 L4.2 4.3 L0.6 8" fill="none" stroke="#605e5c" stroke-width="1"/></svg>
<svg class="b" style="left:1702.7px;top:302.8px;" width="15" height="12" viewBox="0 0 15 12"><path d="M0.6 2 a1.4 1.4 0 0 1 1.4 -1.4 H5.5 L7.2 2.2 H12.5 a1.4 1.4 0 0 1 1.4 1.4 V9.6 a1.4 1.4 0 0 1 -1.4 1.4 H2 a1.4 1.4 0 0 1 -1.4 -1.4 Z M0.6 4 H5.5 L7.2 2.2" fill="none" stroke="#323130" stroke-width="1.1"/></svg>
<div class="t" style="left:1721.5px;top:303.0px;font-size:12.5px;color:#323130;font-weight:400;letter-spacing:-0.3px;">_On-time producti...</div>
<svg class="b" style="left:1692px;top:328.6px;" width="5" height="9" viewBox="0 0 5 9"><path d="M0.6 0.6 L4.2 4.3 L0.6 8" fill="none" stroke="#605e5c" stroke-width="1"/></svg>
<svg class="b" style="left:1702.7px;top:326.8px;" width="15" height="12" viewBox="0 0 15 12"><path d="M0.6 2 a1.4 1.4 0 0 1 1.4 -1.4 H5.5 L7.2 2.2 H12.5 a1.4 1.4 0 0 1 1.4 1.4 V9.6 a1.4 1.4 0 0 1 -1.4 1.4 H2 a1.4 1.4 0 0 1 -1.4 -1.4 Z M0.6 4 H5.5 L7.2 2.2" fill="none" stroke="#323130" stroke-width="1.1"/></svg>
<div class="t" style="left:1721.5px;top:327.0px;font-size:12.5px;color:#323130;font-weight:400;letter-spacing:-0.3px;">_On-time status</div>
<svg class="b" style="left:1692px;top:352.6px;" width="5" height="9" viewBox="0 0 5 9"><path d="M0.6 0.6 L4.2 4.3 L0.6 8" fill="none" stroke="#605e5c" stroke-width="1"/></svg>
<svg class="b" style="left:1702.7px;top:350.8px;" width="15" height="12" viewBox="0 0 15 12"><path d="M0.6 2 a1.4 1.4 0 0 1 1.4 -1.4 H5.5 L7.2 2.2 H12.5 a1.4 1.4 0 0 1 1.4 1.4 V9.6 a1.4 1.4 0 0 1 -1.4 1.4 H2 a1.4 1.4 0 0 1 -1.4 -1.4 Z M0.6 4 H5.5 L7.2 2.2" fill="none" stroke="#323130" stroke-width="1.1"/></svg>
<div class="t" style="left:1721.5px;top:351.0px;font-size:12.5px;color:#323130;font-weight:400;letter-spacing:-0.3px;">_Production status</div>
<div class="b" style="left:1703.8px;top:374.6px;width:11.8px;height:11.5px;border:1px solid #8a8886;border-radius:1.5px;background:#fff0;"></div>
<svg class="b" style="left:1723.5px;top:373.6px;" width="13" height="14" viewBox="0 0 13 14"><g fill="none" stroke="#323130" stroke-width="1.1"><rect x="0.6" y="0.6" width="11.5" height="12.8" rx="2"/><path d="M3 3.3 H9.7"/></g><g fill="#323130"><rect x="2.7" y="5.3" width="1.7" height="1.5"/><rect x="5.5" y="5.3" width="1.7" height="1.5"/><rect x="8.3" y="5.3" width="1.7" height="1.5"/><rect x="2.7" y="7.8" width="1.7" height="1.5"/><rect x="5.5" y="7.8" width="1.7" height="1.5"/><rect x="8.3" y="7.8" width="1.7" height="1.5"/><rect x="2.7" y="10.3" width="1.7" height="1.5"/><rect x="5.5" y="10.3" width="1.7" height="1.5"/><rect x="8.3" y="10.3" width="1.7" height="1.5"/></g></svg>
<div class="t" style="left:1742.0px;top:375.0px;font-size:12.5px;color:#323130;font-weight:400;letter-spacing:-0.3px;">Actual run LB</div>
<div class="b" style="left:1703.8px;top:398.6px;width:11.8px;height:11.5px;background:#117865;border-radius:1.5px;"></div>
<svg class="b" style="left:1705.5px;top:400.8px;" width="9" height="8" viewBox="0 0 9 8"><path d="M0.8 4 L3.2 6.4 L8 1.3" fill="none" stroke="#fff" stroke-width="1.2"/></svg>
<svg class="b" style="left:1723.5px;top:397.6px;" width="13" height="14" viewBox="0 0 13 14"><g fill="none" stroke="#323130" stroke-width="1.1"><rect x="0.6" y="0.6" width="11.5" height="12.8" rx="2"/><path d="M3 3.3 H9.7"/></g><g fill="#323130"><rect x="2.7" y="5.3" width="1.7" height="1.5"/><rect x="5.5" y="5.3" width="1.7" height="1.5"/><rect x="8.3" y="5.3" width="1.7" height="1.5"/><rect x="2.7" y="7.8" width="1.7" height="1.5"/><rect x="5.5" y="7.8" width="1.7" height="1.5"/><rect x="8.3" y="7.8" width="1.7" height="1.5"/><rect x="2.7" y="10.3" width="1.7" height="1.5"/><rect x="5.5" y="10.3" width="1.7" height="1.5"/><rect x="8.3" y="10.3" width="1.7" height="1.5"/></g></svg>
<div class="t" style="left:1742.0px;top:399.0px;font-size:12.5px;color:#323130;font-weight:400;letter-spacing:-0.3px;">Actual run qua...</div>
<div class="b" style="left:1703.8px;top:422.6px;width:11.8px;height:11.5px;border:1px solid #8a8886;border-radius:1.5px;background:#fff0;"></div>
<svg class="b" style="left:1723.5px;top:421.6px;" width="13" height="14" viewBox="0 0 13 14"><g fill="none" stroke="#323130" stroke-width="1.1"><rect x="0.6" y="0.6" width="11.5" height="12.8" rx="2"/><path d="M3 3.3 H9.7"/></g><g fill="#323130"><rect x="2.7" y="5.3" width="1.7" height="1.5"/><rect x="5.5" y="5.3" width="1.7" height="1.5"/><rect x="8.3" y="5.3" width="1.7" height="1.5"/><rect x="2.7" y="7.8" width="1.7" height="1.5"/><rect x="5.5" y="7.8" width="1.7" height="1.5"/><rect x="8.3" y="7.8" width="1.7" height="1.5"/><rect x="2.7" y="10.3" width="1.7" height="1.5"/><rect x="5.5" y="10.3" width="1.7" height="1.5"/><rect x="8.3" y="10.3" width="1.7" height="1.5"/></g></svg>
<div class="t" style="left:1742.0px;top:423.0px;font-size:12.5px;color:#323130;font-weight:400;letter-spacing:-0.3px;">Actual run TON</div>
<div class="b" style="left:1703.8px;top:446.6px;width:11.8px;height:11.5px;border:1px solid #8a8886;border-radius:1.5px;background:#fff0;"></div>
<svg class="b" style="left:1723.5px;top:445.6px;" width="13" height="14" viewBox="0 0 13 14"><g fill="none" stroke="#323130" stroke-width="1.1"><rect x="0.6" y="0.6" width="11.5" height="12.8" rx="2"/><path d="M3 3.3 H9.7"/></g><g fill="#323130"><rect x="2.7" y="5.3" width="1.7" height="1.5"/><rect x="5.5" y="5.3" width="1.7" height="1.5"/><rect x="8.3" y="5.3" width="1.7" height="1.5"/><rect x="2.7" y="7.8" width="1.7" height="1.5"/><rect x="5.5" y="7.8" width="1.7" height="1.5"/><rect x="8.3" y="7.8" width="1.7" height="1.5"/><rect x="2.7" y="10.3" width="1.7" height="1.5"/><rect x="5.5" y="10.3" width="1.7" height="1.5"/><rect x="8.3" y="10.3" width="1.7" height="1.5"/></g></svg>
<div class="t" style="left:1742.0px;top:447.0px;font-size:12.5px;color:#323130;font-weight:400;letter-spacing:-0.3px;">Actual scrap LB</div>
<div class="b" style="left:1703.8px;top:470.6px;width:11.8px;height:11.5px;border:1px solid #8a8886;border-radius:1.5px;background:#fff0;"></div>
<svg class="b" style="left:1723.5px;top:469.6px;" width="13" height="14" viewBox="0 0 13 14"><g fill="none" stroke="#323130" stroke-width="1.1"><rect x="0.6" y="0.6" width="11.5" height="12.8" rx="2"/><path d="M3 3.3 H9.7"/></g><g fill="#323130"><rect x="2.7" y="5.3" width="1.7" height="1.5"/><rect x="5.5" y="5.3" width="1.7" height="1.5"/><rect x="8.3" y="5.3" width="1.7" height="1.5"/><rect x="2.7" y="7.8" width="1.7" height="1.5"/><rect x="5.5" y="7.8" width="1.7" height="1.5"/><rect x="8.3" y="7.8" width="1.7" height="1.5"/><rect x="2.7" y="10.3" width="1.7" height="1.5"/><rect x="5.5" y="10.3" width="1.7" height="1.5"/><rect x="8.3" y="10.3" width="1.7" height="1.5"/></g></svg>
<div class="t" style="left:1742.0px;top:471.0px;font-size:12.5px;color:#323130;font-weight:400;letter-spacing:-0.3px;">Actual scrap T...</div>
<div class="b" style="left:1703.8px;top:494.6px;width:11.8px;height:11.5px;border:1px solid #8a8886;border-radius:1.5px;background:#fff0;"></div>
<svg class="b" style="left:1723.5px;top:493.6px;" width="13" height="14" viewBox="0 0 13 14"><g fill="none" stroke="#323130" stroke-width="1.1"><rect x="0.6" y="0.6" width="11.5" height="12.8" rx="2"/><path d="M3 3.3 H9.7"/></g><g fill="#323130"><rect x="2.7" y="5.3" width="1.7" height="1.5"/><rect x="5.5" y="5.3" width="1.7" height="1.5"/><rect x="8.3" y="5.3" width="1.7" height="1.5"/><rect x="2.7" y="7.8" width="1.7" height="1.5"/><rect x="5.5" y="7.8" width="1.7" height="1.5"/><rect x="8.3" y="7.8" width="1.7" height="1.5"/><rect x="2.7" y="10.3" width="1.7" height="1.5"/><rect x="5.5" y="10.3" width="1.7" height="1.5"/><rect x="8.3" y="10.3" width="1.7" height="1.5"/></g></svg>
<div class="t" style="left:1742.0px;top:495.0px;font-size:12.5px;color:#323130;font-weight:400;letter-spacing:-0.3px;">Consumed LB</div>
<div class="b" style="left:1703.8px;top:518.5999999999999px;width:11.8px;height:11.5px;border:1px solid #8a8886;border-radius:1.5px;background:#fff0;"></div>
<svg class="b" style="left:1723.5px;top:517.5999999999999px;" width="13" height="14" viewBox="0 0 13 14"><g fill="none" stroke="#323130" stroke-width="1.1"><rect x="0.6" y="0.6" width="11.5" height="12.8" rx="2"/><path d="M3 3.3 H9.7"/></g><g fill="#323130"><rect x="2.7" y="5.3" width="1.7" height="1.5"/><rect x="5.5" y="5.3" width="1.7" height="1.5"/><rect x="8.3" y="5.3" width="1.7" height="1.5"/><rect x="2.7" y="7.8" width="1.7" height="1.5"/><rect x="5.5" y="7.8" width="1.7" height="1.5"/><rect x="8.3" y="7.8" width="1.7" height="1.5"/><rect x="2.7" y="10.3" width="1.7" height="1.5"/><rect x="5.5" y="10.3" width="1.7" height="1.5"/><rect x="8.3" y="10.3" width="1.7" height="1.5"/></g></svg>
<div class="t" style="left:1742.0px;top:519.0px;font-size:12.5px;color:#323130;font-weight:400;letter-spacing:-0.3px;">Consumed TON</div>
<div class="b" style="left:1703.8px;top:542.5999999999999px;width:11.8px;height:11.5px;border:1px solid #8a8886;border-radius:1.5px;background:#fff0;"></div>
<svg class="b" style="left:1723.5px;top:541.5999999999999px;" width="13" height="14" viewBox="0 0 13 14"><g fill="none" stroke="#323130" stroke-width="1.1"><rect x="0.6" y="0.6" width="11.5" height="12.8" rx="2"/><path d="M3 3.3 H9.7"/></g><g fill="#323130"><rect x="2.7" y="5.3" width="1.7" height="1.5"/><rect x="5.5" y="5.3" width="1.7" height="1.5"/><rect x="8.3" y="5.3" width="1.7" height="1.5"/><rect x="2.7" y="7.8" width="1.7" height="1.5"/><rect x="5.5" y="7.8" width="1.7" height="1.5"/><rect x="8.3" y="7.8" width="1.7" height="1.5"/><rect x="2.7" y="10.3" width="1.7" height="1.5"/><rect x="5.5" y="10.3" width="1.7" height="1.5"/><rect x="8.3" y="10.3" width="1.7" height="1.5"/></g></svg>
<div class="t" style="left:1742.0px;top:543.0px;font-size:12.5px;color:#323130;font-weight:400;letter-spacing:-0.3px;">Estimated scra...</div>
<div class="b" style="left:1703.8px;top:566.5999999999999px;width:11.8px;height:11.5px;border:1px solid #8a8886;border-radius:1.5px;background:#fff0;"></div>
<svg class="b" style="left:1723.5px;top:565.5999999999999px;" width="13" height="14" viewBox="0 0 13 14"><g fill="none" stroke="#323130" stroke-width="1.1"><rect x="0.6" y="0.6" width="11.5" height="12.8" rx="2"/><path d="M3 3.3 H9.7"/></g><g fill="#323130"><rect x="2.7" y="5.3" width="1.7" height="1.5"/><rect x="5.5" y="5.3" width="1.7" height="1.5"/><rect x="8.3" y="5.3" width="1.7" height="1.5"/><rect x="2.7" y="7.8" width="1.7" height="1.5"/><rect x="5.5" y="7.8" width="1.7" height="1.5"/><rect x="8.3" y="7.8" width="1.7" height="1.5"/><rect x="2.7" y="10.3" width="1.7" height="1.5"/><rect x="5.5" y="10.3" width="1.7" height="1.5"/><rect x="8.3" y="10.3" width="1.7" height="1.5"/></g></svg>
<div class="t" style="left:1742.0px;top:567.0px;font-size:12.5px;color:#323130;font-weight:400;letter-spacing:-0.3px;">Estimated scra...</div>
<div class="b" style="left:1703.8px;top:590.5999999999999px;width:11.8px;height:11.5px;border:1px solid #8a8886;border-radius:1.5px;background:#fff0;"></div>
<svg class="b" style="left:1723.5px;top:589.5999999999999px;" width="13" height="14" viewBox="0 0 13 14"><g fill="none" stroke="#323130" stroke-width="1.1"><rect x="0.6" y="0.6" width="11.5" height="12.8" rx="2"/><path d="M3 3.3 H9.7"/></g><g fill="#323130"><rect x="2.7" y="5.3" width="1.7" height="1.5"/><rect x="5.5" y="5.3" width="1.7" height="1.5"/><rect x="8.3" y="5.3" width="1.7" height="1.5"/><rect x="2.7" y="7.8" width="1.7" height="1.5"/><rect x="5.5" y="7.8" width="1.7" height="1.5"/><rect x="8.3" y="7.8" width="1.7" height="1.5"/><rect x="2.7" y="10.3" width="1.7" height="1.5"/><rect x="5.5" y="10.3" width="1.7" height="1.5"/><rect x="8.3" y="10.3" width="1.7" height="1.5"/></g></svg>
<div class="t" style="left:1742.0px;top:591.0px;font-size:12.5px;color:#323130;font-weight:400;letter-spacing:-0.3px;">Order LB</div>
<div class="b" style="left:1703.8px;top:614.5999999999999px;width:11.8px;height:11.5px;background:#117865;border-radius:1.5px;"></div>
<svg class="b" style="left:1705.5px;top:616.8px;" width="9" height="8" viewBox="0 0 9 8"><path d="M0.8 4 L3.2 6.4 L8 1.3" fill="none" stroke="#fff" stroke-width="1.2"/></svg>
<svg class="b" style="left:1723.5px;top:613.5999999999999px;" width="13" height="14" viewBox="0 0 13 14"><g fill="none" stroke="#323130" stroke-width="1.1"><rect x="0.6" y="0.6" width="11.5" height="12.8" rx="2"/><path d="M3 3.3 H9.7"/></g><g fill="#323130"><rect x="2.7" y="5.3" width="1.7" height="1.5"/><rect x="5.5" y="5.3" width="1.7" height="1.5"/><rect x="8.3" y="5.3" width="1.7" height="1.5"/><rect x="2.7" y="7.8" width="1.7" height="1.5"/><rect x="5.5" y="7.8" width="1.7" height="1.5"/><rect x="8.3" y="7.8" width="1.7" height="1.5"/><rect x="2.7" y="10.3" width="1.7" height="1.5"/><rect x="5.5" y="10.3" width="1.7" height="1.5"/><rect x="8.3" y="10.3" width="1.7" height="1.5"/></g></svg>
<div class="t" style="left:1742.0px;top:615.0px;font-size:12.5px;color:#323130;font-weight:400;letter-spacing:-0.3px;">Order quantity</div>
<div class="b" style="left:1703.8px;top:638.5999999999999px;width:11.8px;height:11.5px;border:1px solid #8a8886;border-radius:1.5px;background:#fff0;"></div>
<svg class="b" style="left:1723.5px;top:637.5999999999999px;" width="13" height="14" viewBox="0 0 13 14"><g fill="none" stroke="#323130" stroke-width="1.1"><rect x="0.6" y="0.6" width="11.5" height="12.8" rx="2"/><path d="M3 3.3 H9.7"/></g><g fill="#323130"><rect x="2.7" y="5.3" width="1.7" height="1.5"/><rect x="5.5" y="5.3" width="1.7" height="1.5"/><rect x="8.3" y="5.3" width="1.7" height="1.5"/><rect x="2.7" y="7.8" width="1.7" height="1.5"/><rect x="5.5" y="7.8" width="1.7" height="1.5"/><rect x="8.3" y="7.8" width="1.7" height="1.5"/><rect x="2.7" y="10.3" width="1.7" height="1.5"/><rect x="5.5" y="10.3" width="1.7" height="1.5"/><rect x="8.3" y="10.3" width="1.7" height="1.5"/></g></svg>
<div class="t" style="left:1742.0px;top:639.0px;font-size:12.5px;color:#323130;font-weight:400;letter-spacing:-0.3px;">Order TON</div>
<div class="b" style="left:1703.8px;top:662.5999999999999px;width:11.8px;height:11.5px;border:1px solid #8a8886;border-radius:1.5px;background:#fff0;"></div>
<svg class="b" style="left:1723.5px;top:661.5999999999999px;" width="13" height="14" viewBox="0 0 13 14"><g fill="none" stroke="#323130" stroke-width="1.1"><rect x="0.6" y="0.6" width="11.5" height="12.8" rx="2"/><path d="M3 3.3 H9.7"/></g><g fill="#323130"><rect x="2.7" y="5.3" width="1.7" height="1.5"/><rect x="5.5" y="5.3" width="1.7" height="1.5"/><rect x="8.3" y="5.3" width="1.7" height="1.5"/><rect x="2.7" y="7.8" width="1.7" height="1.5"/><rect x="5.5" y="7.8" width="1.7" height="1.5"/><rect x="8.3" y="7.8" width="1.7" height="1.5"/><rect x="2.7" y="10.3" width="1.7" height="1.5"/><rect x="5.5" y="10.3" width="1.7" height="1.5"/><rect x="8.3" y="10.3" width="1.7" height="1.5"/></g></svg>
<div class="t" style="left:1742.0px;top:663.0px;font-size:12.5px;color:#323130;font-weight:400;letter-spacing:-0.3px;">Over/under pr...</div>
<div class="b" style="left:1703.8px;top:686.5999999999999px;width:11.8px;height:11.5px;border:1px solid #8a8886;border-radius:1.5px;background:#fff0;"></div>
<svg class="b" style="left:1723.5px;top:685.5999999999999px;" width="13" height="14" viewBox="0 0 13 14"><g fill="none" stroke="#323130" stroke-width="1.1"><rect x="0.6" y="0.6" width="11.5" height="12.8" rx="2"/><path d="M3 3.3 H9.7"/></g><g fill="#323130"><rect x="2.7" y="5.3" width="1.7" height="1.5"/><rect x="5.5" y="5.3" width="1.7" height="1.5"/><rect x="8.3" y="5.3" width="1.7" height="1.5"/><rect x="2.7" y="7.8" width="1.7" height="1.5"/><rect x="5.5" y="7.8" width="1.7" height="1.5"/><rect x="8.3" y="7.8" width="1.7" height="1.5"/><rect x="2.7" y="10.3" width="1.7" height="1.5"/><rect x="5.5" y="10.3" width="1.7" height="1.5"/><rect x="8.3" y="10.3" width="1.7" height="1.5"/></g></svg>
<div class="t" style="left:1742.0px;top:687.0px;font-size:12.5px;color:#323130;font-weight:400;letter-spacing:-0.3px;">Over/under pr...</div>
<div class="b" style="left:1703.8px;top:710.5999999999999px;width:11.8px;height:11.5px;border:1px solid #8a8886;border-radius:1.5px;background:#fff0;"></div>
<svg class="b" style="left:1723.5px;top:709.5999999999999px;" width="13" height="14" viewBox="0 0 13 14"><g fill="none" stroke="#323130" stroke-width="1.1"><rect x="0.6" y="0.6" width="11.5" height="12.8" rx="2"/><path d="M3 3.3 H9.7"/></g><g fill="#323130"><rect x="2.7" y="5.3" width="1.7" height="1.5"/><rect x="5.5" y="5.3" width="1.7" height="1.5"/><rect x="8.3" y="5.3" width="1.7" height="1.5"/><rect x="2.7" y="7.8" width="1.7" height="1.5"/><rect x="5.5" y="7.8" width="1.7" height="1.5"/><rect x="8.3" y="7.8" width="1.7" height="1.5"/><rect x="2.7" y="10.3" width="1.7" height="1.5"/><rect x="5.5" y="10.3" width="1.7" height="1.5"/><rect x="8.3" y="10.3" width="1.7" height="1.5"/></g></svg>
<div class="t" style="left:1742.0px;top:711.0px;font-size:12.5px;color:#323130;font-weight:400;letter-spacing:-0.3px;">Processing days</div>
<div class="b" style="left:1703.8px;top:734.5999999999999px;width:11.8px;height:11.5px;border:1px solid #8a8886;border-radius:1.5px;background:#fff0;"></div>
<svg class="b" style="left:1724px;top:733.5999999999999px;" width="12" height="14" viewBox="0 0 12 14"><path d="M11 2 V0.8 H0.8 L6 6.8 L0.8 12.8 H11 V11.6" fill="none" stroke="#323130" stroke-width="1.1"/></svg>
<div class="t" style="left:1742.0px;top:735.0px;font-size:12.5px;color:#323130;font-weight:400;letter-spacing:-0.3px;">Production ord...</div>
<div class="b" style="left:1703.8px;top:758.5999999999999px;width:11.8px;height:11.5px;border:1px solid #8a8886;border-radius:1.5px;background:#fff0;"></div>
<svg class="b" style="left:1723.5px;top:757.5999999999999px;" width="13" height="14" viewBox="0 0 13 14"><g fill="none" stroke="#323130" stroke-width="1.1"><rect x="0.6" y="0.6" width="11.5" height="12.8" rx="2"/><path d="M3 3.3 H9.7"/></g><g fill="#323130"><rect x="2.7" y="5.3" width="1.7" height="1.5"/><rect x="5.5" y="5.3" width="1.7" height="1.5"/><rect x="8.3" y="5.3" width="1.7" height="1.5"/><rect x="2.7" y="7.8" width="1.7" height="1.5"/><rect x="5.5" y="7.8" width="1.7" height="1.5"/><rect x="8.3" y="7.8" width="1.7" height="1.5"/><rect x="2.7" y="10.3" width="1.7" height="1.5"/><rect x="5.5" y="10.3" width="1.7" height="1.5"/><rect x="8.3" y="10.3" width="1.7" height="1.5"/></g></svg>
<div class="t" style="left:1742.0px;top:759.0px;font-size:12.5px;color:#323130;font-weight:400;letter-spacing:-0.3px;">Production ord...</div>
<div class="b" style="left:1703.8px;top:782.5999999999999px;width:11.8px;height:11.5px;border:1px solid #8a8886;border-radius:1.5px;background:#fff0;"></div>
<svg class="b" style="left:1723.5px;top:781.5999999999999px;" width="13" height="14" viewBox="0 0 13 14"><g fill="none" stroke="#323130" stroke-width="1.1"><rect x="0.6" y="0.6" width="11.5" height="12.8" rx="2"/><path d="M3 3.3 H9.7"/></g><g fill="#323130"><rect x="2.7" y="5.3" width="1.7" height="1.5"/><rect x="5.5" y="5.3" width="1.7" height="1.5"/><rect x="8.3" y="5.3" width="1.7" height="1.5"/><rect x="2.7" y="7.8" width="1.7" height="1.5"/><rect x="5.5" y="7.8" width="1.7" height="1.5"/><rect x="8.3" y="7.8" width="1.7" height="1.5"/><rect x="2.7" y="10.3" width="1.7" height="1.5"/><rect x="5.5" y="10.3" width="1.7" height="1.5"/><rect x="8.3" y="10.3" width="1.7" height="1.5"/></g></svg>
<div class="t" style="left:1742.0px;top:783.0px;font-size:12.5px;color:#323130;font-weight:400;letter-spacing:-0.3px;">RAF cost</div>
</body></html>
